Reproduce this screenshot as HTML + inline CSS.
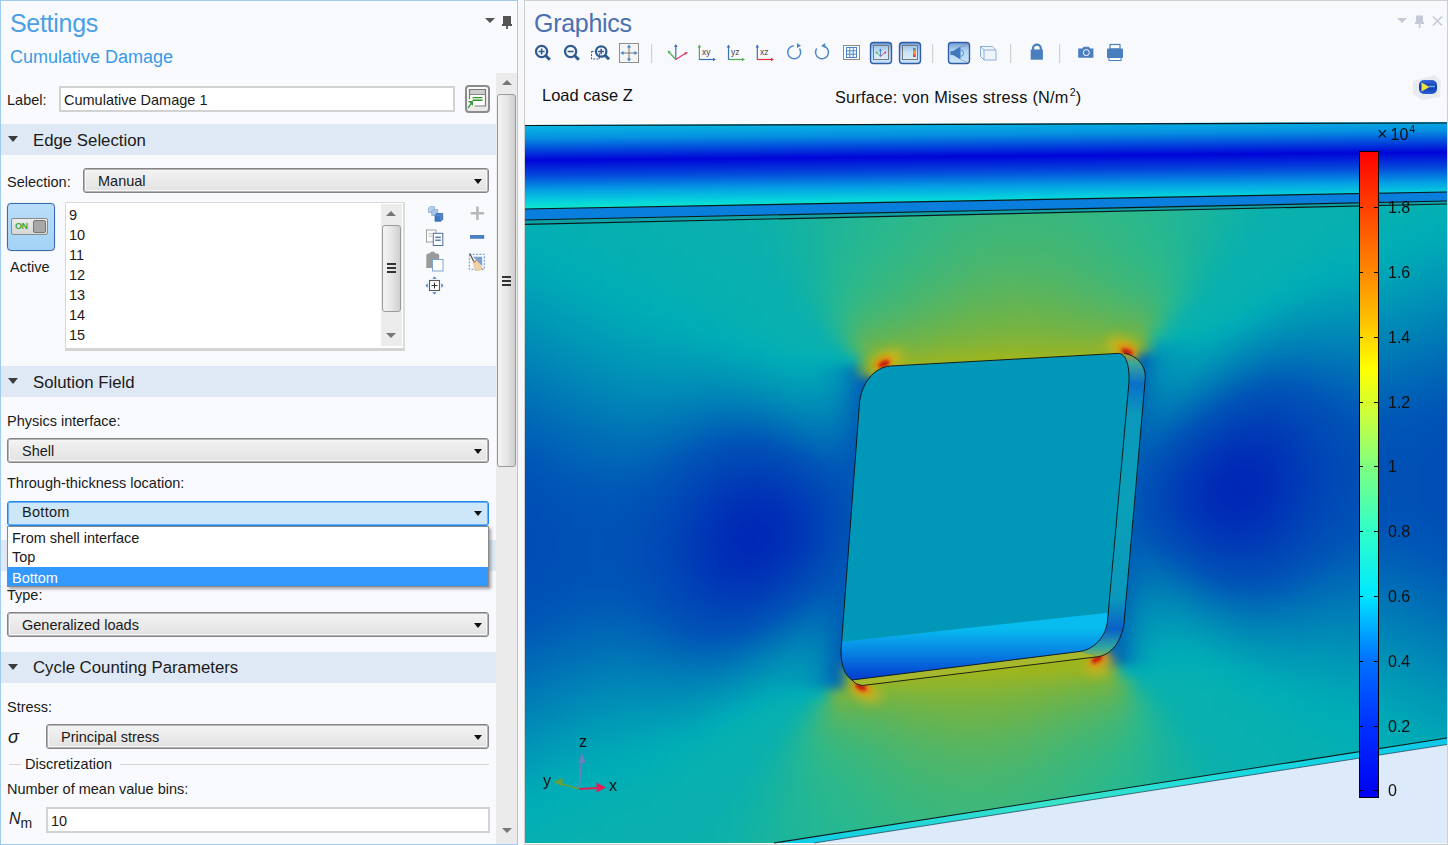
<!DOCTYPE html>
<html><head><meta charset="utf-8">
<style>
*{box-sizing:border-box;margin:0;padding:0}
html,body{width:1448px;height:845px;overflow:hidden;background:#f7f8fb;font-family:"Liberation Sans",sans-serif;color:#1a1a1a}
.a{position:absolute}
.t{position:absolute;white-space:nowrap;line-height:1;font-size:14.5px}
.band{position:absolute;left:1px;width:495px;height:31px;background:#dfe9f5}
.tri{position:absolute;width:0;height:0;border-left:5.5px solid transparent;border-right:5.5px solid transparent;border-top:6.5px solid #3c3c3c}
.combo{position:absolute;height:25px;border:1px solid #858585;border-radius:3px;background:linear-gradient(#f3f3f3,#e2e2e2);box-shadow:inset 0 0 0 1px #b4b4b4,inset 0 0 0 2px #f6f6f6}
.combo .dd{position:absolute;right:6px;top:10px;width:0;height:0;border-left:4.5px solid transparent;border-right:4.5px solid transparent;border-top:5px solid #111}
.combo span{position:absolute;left:14px;top:5px;font-size:14.5px;line-height:1;white-space:nowrap}
.tb{position:absolute;background:#fff;border:2px solid #d2d2d2}
#fld i{position:absolute;left:0;width:100%;height:13px;display:block}
</style></head><body>
<!-- LEFT PANEL -->
<div class="a" style="left:0;top:0;width:518px;height:845px;background:#f9fafe"></div>
<div class="a" style="left:0;top:0;width:518px;height:1px;background:#9dcbf2"></div>
<div class="a" style="left:0;top:0;width:1px;height:845px;background:#9dcbf2"></div>
<div class="a" style="left:517px;top:0;width:1px;height:845px;background:#9dcbf2"></div>
<div class="a" style="left:0;top:844px;width:518px;height:1px;background:#9dcbf2"></div>

<div class="t" style="left:10px;top:11px;font-size:25px;letter-spacing:-0.3px;color:#4a9fe8">Settings</div>
<div class="t" style="left:10px;top:48px;font-size:18px;color:#3a9ae8">Cumulative Damage</div>
<!-- panel icons -->
<div class="tri" style="left:485px;top:18px;border-left-width:5px;border-right-width:5px;border-top:5px solid #555"></div>
<div class="a" style="left:503px;top:16px;width:8px;height:8px;background:#555"></div>
<div class="a" style="left:502px;top:24px;width:10px;height:2px;background:#555"></div>
<div class="a" style="left:506px;top:26px;width:2px;height:3px;background:#666"></div>

<!-- outer scrollbar -->
<div class="a" style="left:496px;top:73px;width:21px;height:771px;background:#ebebeb"></div>
<div class="tri" style="left:502px;top:80px;border-top:none;border-bottom:5px solid #777;border-left-width:5px;border-right-width:5px"></div>
<div class="a" style="left:497px;top:94px;width:19px;height:373px;border:1px solid #9a9a9a;border-radius:3px;background:linear-gradient(90deg,#f4f4f4 0%,#e6e6e6 50%,#cfcfcf 100%)"></div>
<div class="a" style="left:502px;top:276px;width:9px;height:2px;background:#333"></div>
<div class="a" style="left:502px;top:280px;width:9px;height:2px;background:#333"></div>
<div class="a" style="left:502px;top:284px;width:9px;height:2px;background:#333"></div>
<div class="tri" style="left:502px;top:828px;border-left-width:5px;border-right-width:5px;border-top:5px solid #777"></div>

<!-- Label row -->
<div class="t" style="left:7px;top:93px">Label:</div>
<div class="tb" style="left:59px;top:86px;width:396px;height:26px"></div>
<div class="t" style="left:64px;top:93px">Cumulative Damage 1</div>
<div class="a" style="left:465px;top:85px;width:25px;height:28px;border:2px solid #8c8c8c;border-radius:4px;background:linear-gradient(#fafafa,#e8e8e8)"></div>
<svg class="a" style="left:465px;top:85px" width="25" height="28" viewBox="465 85 25 28">
  <rect x="469.5" y="94.5" width="16" height="12" fill="#fff"/>
  <rect x="469.5" y="89.5" width="16" height="5" fill="#cdcdcd"/>
  <path d="M469.5 99V89.5h16v16.5h-11" fill="none" stroke="#777" stroke-width="1.2"/>
  <path d="M469.5 94.5h16" stroke="#888" stroke-width="1"/>
  <rect x="472.5" y="97" width="10" height="1.3" fill="#3a9a30"/><rect x="472.5" y="99.5" width="10" height="1.5" fill="#2f8f25"/>
  <path d="M468 101h5v5l-1.5-1.5-3 4-1-1 3-4z" fill="#3a9a40"/>
</svg>

<!-- Edge Selection -->
<div class="band" style="top:124px"></div>
<div class="tri" style="left:8px;top:136px"></div>
<div class="t" style="left:33px;top:133px;font-size:16.8px">Edge Selection</div>
<div class="t" style="left:7px;top:175px">Selection:</div>
<div class="combo" style="left:83px;top:168px;width:406px"><span style="left:14px">Manual</span><i class="dd"></i></div>

<!-- Active button -->
<div class="a" style="left:7px;top:203px;width:48px;height:48px;border:1px solid #3a6cad;border-radius:4px;background:linear-gradient(#b9defa,#a3d2f6);box-shadow:0 0 1px #888"></div>
<div class="a" style="left:11px;top:218px;width:37px;height:17px;border:1px solid #8a8a8a;border-radius:2px;background:linear-gradient(#ececec,#d6d6d6)"></div>
<div class="t" style="left:15px;top:222px;font-size:9px;font-weight:bold;color:#36a83f;letter-spacing:-0.5px">ON</div>
<div class="a" style="left:33px;top:220px;width:13px;height:13px;border:1px solid #777;border-radius:2px;background:#a8a8a8"></div>
<div class="t" style="left:10px;top:260px">Active</div>

<!-- listbox -->
<div class="a" style="left:65px;top:202px;width:340px;height:149px;background:#fff;border:1px solid #dadada;border-bottom:3px solid #d4d4d4;border-right:2px solid #dcdcdc"></div>
<div class="t" style="left:69px;top:208px">9</div>
<div class="t" style="left:69px;top:228px">10</div>
<div class="t" style="left:69px;top:248px">11</div>
<div class="t" style="left:69px;top:268px">12</div>
<div class="t" style="left:69px;top:288px">13</div>
<div class="t" style="left:69px;top:308px">14</div>
<div class="t" style="left:69px;top:328px">15</div>
<div class="a" style="left:381px;top:204px;width:21px;height:142px;background:#ececec"></div>
<div class="tri" style="left:386px;top:211px;border-top:none;border-bottom:5px solid #777;border-left-width:5px;border-right-width:5px"></div>
<div class="a" style="left:382px;top:225px;width:19px;height:87px;border:1px solid #9a9a9a;border-radius:3px;background:linear-gradient(90deg,#f4f4f4 0%,#e6e6e6 50%,#cfcfcf 100%)"></div>
<div class="a" style="left:387px;top:263px;width:9px;height:2px;background:#333"></div>
<div class="a" style="left:387px;top:267px;width:9px;height:2px;background:#333"></div>
<div class="a" style="left:387px;top:271px;width:9px;height:2px;background:#333"></div>
<div class="tri" style="left:386px;top:333px;border-left-width:5px;border-right-width:5px;border-top:5px solid #777"></div>

<!-- list tool icons -->
<svg class="a" style="left:420px;top:200px" width="72" height="100" viewBox="420 200 72 100">
  <g stroke-width="0.8">
    <path d="M428.5 208l1.5-1.5h4.5v4.5l-1.5 1.5h-4.5z" fill="#b9cfe9" stroke="#8eaed6"/>
    <path d="M431.7 211l1.5-1.5h4.5v4.5l-1.5 1.5h-4.5z" fill="#a9c3e4" stroke="#86a8d3"/>
    <path d="M435 215.2l1.7-1.7h6v6l-1.7 1.7h-6z" fill="#3f78c0" stroke="#2f66ae"/>
    <path d="M435 215.2h6v6M441 215.2l1.7-1.7" fill="none" stroke="#7aa4d8" stroke-width="0.6"/>
  </g>
  <rect x="426.5" y="230" width="9.5" height="12" fill="#fbfbfb" stroke="#9a9a9a" stroke-width="0.9"/>
  <rect x="428.5" y="233" width="4" height="1.2" fill="#c8c8c8"/><rect x="428.5" y="235.5" width="4" height="1.2" fill="#c8c8c8"/>
  <rect x="433.3" y="233.3" width="9.5" height="12.2" fill="#fff" stroke="#4f6f9f" stroke-width="1"/>
  <rect x="435.3" y="236.5" width="5.5" height="1.6" fill="#5f7faf"/><rect x="435.3" y="239.5" width="5.5" height="1.6" fill="#5f7faf"/>
  <path d="M426.3 268V255.5q0-2 2-2h1.3q1-2 3-2t3 2h1.6q2 0 2 2V259h-7v9z" fill="#9a9a9a"/>
  <rect x="432.5" y="259.5" width="10.5" height="11.5" fill="#fff" stroke="#7ea4d4" stroke-width="1"/>
  <rect x="429.5" y="280.5" width="10" height="10" fill="#fff" stroke="#5a5a5a" stroke-width="1.1"/>
  <path d="M434.5 282.5v6M431.5 285.5h6" stroke="#333" stroke-width="1"/>
  <path d="M434.5 276.5l2.2 2.2h-4.4zM434.5 294.5l2.2-2.2h-4.4zM425.5 285.5l2.2-2.2v4.4zM443.5 285.5l-2.2-2.2v4.4z" fill="#3f7cc6"/>
  <path d="M477.4 206.5v13.4M470.7 213.2h13.4" stroke="#b8b8b8" stroke-width="2.6"/>
  <rect x="470" y="235" width="14.2" height="3.8" fill="#4a7fc0"/>
  <rect x="469.3" y="254.3" width="15" height="15" fill="none" stroke="#4f86c8" stroke-width="0.9" stroke-dasharray="2 1.4"/>
  <path d="M473 256.8h9.2v9.5z" fill="#7aa2d2"/>
  <path d="M469.8 253.5l4.5 9" stroke="#5a5a5a" stroke-width="1.3"/>
  <path d="M473.5 261.5l3-1.5q3 4 6 9q-4 2-7 1.5q-1.5-4-2-9z" fill="#f2d4a8" stroke="#c8a070" stroke-width="0.5"/>
  <path d="M473.8 262.2l2.8-1.4" stroke="#d04030" stroke-width="0.8"/>
</svg>

<!-- Solution Field -->
<div class="band" style="top:366px"></div>
<div class="tri" style="left:8px;top:378px"></div>
<div class="t" style="left:33px;top:375px;font-size:16.8px">Solution Field</div>
<div class="t" style="left:7px;top:414px">Physics interface:</div>
<div class="combo" style="left:7px;top:438px;width:482px"><span>Shell</span><i class="dd"></i></div>
<div class="t" style="left:7px;top:476px">Through-thickness location:</div>
<!-- hidden band behind dropdown -->
<div class="band" style="top:540px"></div>
<div class="a" style="left:7px;top:501px;width:482px;height:25px;border:1px solid #1e86ec;border-radius:3px;background:#cde6f8;box-shadow:inset 0 0 0 1px #6ab0f2"></div>
<div class="t" style="left:22px;top:505px;letter-spacing:0.3px">Bottom</div>
<div class="a" style="left:474px;top:511px;width:0;height:0;border-left:4.5px solid transparent;border-right:4.5px solid transparent;border-top:5px solid #111"></div>
<!-- dropdown list -->
<div class="a" style="left:7px;top:526px;width:482px;height:61px;background:#fff;border:1px solid #8a8a8a;box-shadow:2px 2px 3px rgba(0,0,0,0.35)"></div>
<div class="t" style="left:12px;top:531px">From shell interface</div>
<div class="t" style="left:12px;top:550px">Top</div>
<div class="a" style="left:8px;top:567px;width:480px;height:19px;background:#3399ff"></div>
<div class="t" style="left:12px;top:571px;color:#fff">Bottom</div>

<div class="t" style="left:7px;top:588px">Type:</div>
<div class="combo" style="left:7px;top:612px;width:482px"><span>Generalized loads</span><i class="dd"></i></div>

<!-- Cycle Counting -->
<div class="band" style="top:652px"></div>
<div class="tri" style="left:8px;top:664px"></div>
<div class="t" style="left:33px;top:660px;font-size:16.8px">Cycle Counting Parameters</div>
<div class="t" style="left:7px;top:700px">Stress:</div>
<div class="t" style="left:8px;top:728px;font-size:18px;font-style:italic">σ</div>
<div class="combo" style="left:46px;top:724px;width:443px"><span>Principal stress</span><i class="dd"></i></div>
<div class="a" style="left:9px;top:764px;width:12px;height:1px;background:#d4d4d4"></div>
<div class="a" style="left:120px;top:764px;width:369px;height:1px;background:#d4d4d4"></div>
<div class="t" style="left:25px;top:757px">Discretization</div>
<div class="t" style="left:7px;top:782px">Number of mean value bins:</div>
<div class="t" style="left:9px;top:811px;font-size:16px;font-style:italic">N<span style="font-style:normal;font-size:14px;position:relative;top:4px">m</span></div>
<div class="tb" style="left:46px;top:807px;width:444px;height:26px"></div>
<div class="t" style="left:51px;top:814px">10</div>


<!-- RIGHT PANEL -->
<div class="a" style="left:524px;top:0;width:924px;height:845px;background:#f8f9fd;border:1px solid #cfcfcf"></div>
<div class="t" style="left:534px;top:11px;font-size:25px;letter-spacing:-0.3px;color:#4a70b0">Graphics</div>
<!-- panel icons -->
<svg class="a" style="left:1394px;top:14px" width="52" height="16" viewBox="0 0 52 16">
  <path d="M3 4h10l-5 5z" fill="#c3cad6"/>
  <rect x="22" y="1.5" width="7" height="7" fill="#c3cad6"/><rect x="21" y="8" width="9" height="2" fill="#c3cad6"/><rect x="24.8" y="10" width="1.6" height="4" fill="#c3cad6"/>
  <path d="M39 2.5l9 9M48 2.5l-9 9" stroke="#c3cad6" stroke-width="1.6"/>
</svg>
<!-- toolbar -->
<svg class="a" style="left:525px;top:38px" width="620" height="30" viewBox="525 38 620 30">
  <g fill="none" stroke="#2e5b8f" stroke-width="2.2">
    <circle cx="541.6" cy="51.5" r="5.6"/><path d="M545.6 55.5l4.2 4.2" stroke-width="3"/>
    <path d="M538.6 51.5h6M541.6 48.5v6" stroke-width="1.6"/>
    <circle cx="570.6" cy="51.5" r="5.6"/><path d="M574.6 55.5l4.2 4.2" stroke-width="3"/>
    <path d="M567.6 51.5h6" stroke-width="1.6"/>
    <circle cx="601.2" cy="51.5" r="5.2"/><path d="M605 55.3l4 4" stroke-width="3"/>
    <path d="M598.4 51.5h5.6M601.2 48.7v5.6" stroke-width="1.5"/>
  </g>
  <rect x="591.5" y="51.5" width="8" height="7.5" fill="none" stroke="#2e5b8f" stroke-width="1" stroke-dasharray="2 1.3"/>
  <rect x="619.5" y="43.5" width="19" height="19" fill="#f4f4f4" stroke="#8f8f8f" stroke-width="1"/>
  <path d="M629 46v14M622 53h14" stroke="#777" stroke-width="1"/>
  <path d="M629 44.5l2 3h-4zM629 61.5l2-3h-4zM620.5 53l3-2v4zM637.5 53l-3-2v4z" fill="#3d7cc9"/>
  <rect x="651" y="44" width="1.2" height="19" fill="#d0d0d0"/>
  <path d="M675.8 59.5V45.5" stroke="#3d6fb5" stroke-width="1.2"/><path d="M675.8 44l-1.8 3h3.6z" fill="#3d6fb5"/>
  <path d="M675.8 59.5L668.5 51.5" stroke="#4caf50" stroke-width="1.2"/><path d="M667.5 50.5l3.3 1.2-2.1 2.1z" fill="#4caf50"/>
  <path d="M675.8 59.5L686 53" stroke="#e23b6b" stroke-width="1.4"/><path d="M688 52l-3.7 0.5 1.5 2.6z" fill="#e23b6b"/>
  <g font-family="Liberation Sans" font-size="8.5" fill="#444">
    <text x="702" y="55">xy</text><text x="731" y="55">yz</text><text x="760" y="55">xz</text>
  </g>
  <path d="M699.4 60V46" stroke="#4caf50" stroke-width="1.2"/><path d="M699.4 44.5l-1.8 3h3.6z" fill="#4caf50"/>
  <path d="M699.4 59.5H714" stroke="#3d6fb5" stroke-width="1.2"/><path d="M716 59.5l-3-1.8v3.6z" fill="#3d6fb5"/>
  <path d="M728.5 60V46" stroke="#3d6fb5" stroke-width="1.2"/><path d="M728.5 44.5l-1.8 3h3.6z" fill="#3d6fb5"/>
  <path d="M728.5 59.5H743" stroke="#4caf50" stroke-width="1.2"/><path d="M745 59.5l-3-1.8v3.6z" fill="#4caf50"/>
  <path d="M757.3 60V46" stroke="#3d6fb5" stroke-width="1.2"/><path d="M757.3 44.5l-1.8 3h3.6z" fill="#3d6fb5"/>
  <path d="M757.3 59.5H772" stroke="#d33" stroke-width="1.2"/><path d="M774 59.5l-3-1.8v3.6z" fill="#d33"/>
  <g fill="none" stroke="#4a86c8" stroke-width="1.4">
    <path d="M799.5 48.5A6.5 6.5 0 1 1 793.7 45.8"/>
    <path d="M816.7 48.5A6.5 6.5 0 1 0 822.5 45.8"/>
  </g>
  <path d="M797 43l4 2.8-4 2.2z" fill="#4a86c8"/><path d="M825.2 43l-4 2.8 4 2.2z" fill="#4a86c8"/>
  <rect x="843.5" y="45.5" width="16" height="14" fill="#fff" stroke="#8c8c8c" stroke-width="1"/>
  <g stroke="#4a86c8" stroke-width="1" fill="none"><rect x="846.5" y="47.5" width="10" height="10"/><path d="M849.8 47.5v10M853.2 47.5v10M846.5 50.8h10M846.5 54.2h10"/></g>
  <rect x="870.5" y="42.5" width="21" height="21" rx="3" fill="url(#pbg)" stroke="#2f5ea6" stroke-width="1.4"/>
  <rect x="873.5" y="45.5" width="15" height="14" fill="url(#pin)" stroke="#7a7a7a" stroke-width="1"/>
  <path d="M880.4 56.5V50" stroke="#4a7cc0" stroke-width="1"/><path d="M880.4 48.5l-1.5 2.5h3z" fill="#4a7cc0"/>
  <path d="M880.4 56.5L877 52.5" stroke="#4caf50" stroke-width="0.9"/><circle cx="876.6" cy="52.5" r="1" fill="#4caf50"/>
  <path d="M880.4 56.5L885 52.5" stroke="#e23b6b" stroke-width="0.9"/><circle cx="885.3" cy="52.5" r="1" fill="#e23b6b"/>
  <rect x="899.5" y="42.5" width="21" height="21" rx="3" fill="url(#pbg)" stroke="#2f5ea6" stroke-width="1.4"/>
  <rect x="902.5" y="45.5" width="15" height="14" fill="url(#pin)" stroke="#7a7a7a" stroke-width="1"/>
  <rect x="913" y="48" width="2.8" height="9" rx="0.8" fill="url(#cbar)"/>
  <defs><linearGradient id="pbg" x1="0" y1="0" x2="0" y2="1"><stop offset="0" stop-color="#6e9cd2"/><stop offset="0.4" stop-color="#b4d6f4"/><stop offset="1" stop-color="#c8e6fb"/></linearGradient>
  <linearGradient id="pin" x1="0" y1="0" x2="0" y2="1"><stop offset="0" stop-color="#9cc4ea"/><stop offset="0.5" stop-color="#cce4f8"/><stop offset="1" stop-color="#d8eefc"/></linearGradient></defs>
  <rect x="932" y="44" width="1.2" height="19" fill="#d0d0d0"/>
  <rect x="948.5" y="42.5" width="21" height="21" rx="3" fill="url(#pbg)" stroke="#2f5ea6" stroke-width="1.4"/>
  <path d="M950.5 51h2.5l7.5-4.5v13l-7.5-4.5h-2.5z" fill="#3f78bd"/>
  <path d="M960.5 47l8.5-3.5M960.5 59.5l8.5 3.5" stroke="#9a7f8a" stroke-width="0.6"/>
  <path d="M960.5 50a3.2 3.2 0 0 1 0 6.4" stroke="#4f7fbf" fill="none" stroke-width="0.8"/>
  <g fill="none" stroke="#8fb0d8" stroke-width="1">
    <path d="M980.5 46.5h12l3.5 3.5v10h-12l-3.5-3.5z" fill="#eef4fb"/>
    <path d="M984 50h12M984 50v10M980.5 46.5l3.5 3.5"/>
  </g>
  <rect x="1010" y="44" width="1.2" height="19" fill="#d0d0d0"/>
  <path d="M1033 50v-1.5a3.9 3.9 0 0 1 7.8 0V50" fill="none" stroke="#4a7fbf" stroke-width="2.2"/>
  <rect x="1030.7" y="49.5" width="12.2" height="10.2" fill="#4a7fbf"/>
  <rect x="1059" y="44" width="1.2" height="19" fill="#d0d0d0"/>
  <path d="M1078.2 48.5h4l1.5-1.8h5l1.5 1.8h3.2v9.3h-15.2z" fill="#4a7fbf"/>
  <circle cx="1086.3" cy="52.6" r="3" fill="none" stroke="#fff" stroke-width="1"/>
  <rect x="1110" y="44.5" width="10" height="4.5" fill="#fff" stroke="#4a7fbf" stroke-width="1.2"/>
  <rect x="1107" y="48.5" width="16" height="9.5" rx="1" fill="#4a7fbf"/>
  <rect x="1109" y="57.5" width="12" height="3" fill="#fff" stroke="#4a7fbf" stroke-width="1"/>
  <defs><linearGradient id="cbar" x1="0" y1="0" x2="0" y2="1"><stop offset="0" stop-color="#4a78b8"/><stop offset=".5" stop-color="#f8a020"/><stop offset="1" stop-color="#e02040"/></linearGradient></defs>
</svg>
<div class="t" style="left:542px;top:87px;font-size:16.5px;color:#111">Load case Z</div>
<div class="t" style="left:835px;top:89px;font-size:16.3px;letter-spacing:0.25px;color:#111">Surface: von Mises stress (N/m<sup style="font-size:10.5px;position:relative;top:-2px;vertical-align:top;margin-left:1px">2</sup>)</div>
<!-- logo -->
<svg class="a" style="left:1410px;top:72px" width="36" height="30" viewBox="1410 72 36 30">
  <path d="M1413 81l22-6 6 6-1 16-18 3-9-6z" fill="#e6e9ee" opacity="0.9"/>
  <defs><linearGradient id="lg1" x1="0" y1="0" x2="0" y2="1"><stop offset="0" stop-color="#3a6ad8"/><stop offset="0.5" stop-color="#1038b0"/><stop offset="1" stop-color="#2860d0"/></linearGradient></defs>
  <rect x="1419" y="80" width="18" height="14" rx="5" fill="url(#lg1)"/>
  <path d="M1421.5 82.5l8 4.5-8 4.5z" fill="#f0e040"/>
  <path d="M1429 86.5h6" stroke="#60b0f0" stroke-width="1.5"/>
</svg>

<!--FIELD--><div class="a" style="left:525px;top:125px;width:922px;height:718px;overflow:hidden"><div id="fld" style="position:absolute;left:-24px;top:-24px;width:970px;height:766px;filter:blur(5px)"><i style="top:0px;background:linear-gradient(90deg,#0ab0ac 0px,#0bb0ac 16px,#0bb1ac 32px,#0bb1ac 48px,#0bb1ac 64px,#0bb1ac 80px,#0bb1ab 96px,#0bb1ab 112px,#0cb1ab 128px,#0cb1ab 144px,#0cb1ab 160px,#0cb1ab 176px,#0db1a9 192px,#0eb1a8 208px,#10b2a7 224px,#11b2a6 240px,#13b2a4 256px,#14b3a2 272px,#16b3a1 288px,#18b49f 304px,#1ab49d 320px,#1bb49b 336px,#1db59a 352px,#1fb598 368px,#21b696 384px,#22b695 400px,#23b694 416px,#25b792 432px,#26b791 448px,#27b790 464px,#28b78f 480px,#29b88f 496px,#29b88e 512px,#29b88e 528px,#29b88e 544px,#29b88f 560px,#28b78f 576px,#27b790 592px,#26b791 608px,#25b792 624px,#23b694 640px,#22b695 656px,#20b597 672px,#1eb599 688px,#1cb59b 704px,#1ab49d 720px,#17b39f 736px,#15b3a2 752px,#13b2a4 768px,#11b2a6 784px,#0fb2a8 800px,#0db1a9 816px,#0cb1ab 832px,#0cb1ab 848px,#0bb1ab 864px,#0bb1ab 880px,#0bb1ac 896px,#0bb1ac 912px,#0bb1ac 928px,#0bb1ac 944px,#0bb0ac 960px,#0ab0ac 976px)"></i><i style="top:12px;background:linear-gradient(90deg,#0ab0ad 0px,#0ab0ad 16px,#0ab0ac 32px,#0ab0ac 48px,#0bb0ac 64px,#0bb1ac 80px,#0bb1ac 96px,#0bb1ac 112px,#0bb1ab 128px,#0bb1ab 144px,#0cb1ab 160px,#0cb1ab 176px,#0db1aa 192px,#0eb1a9 208px,#0fb2a8 224px,#11b2a6 240px,#12b2a5 256px,#14b3a3 272px,#16b3a1 288px,#18b49f 304px,#1ab49d 320px,#1cb49b 336px,#1eb599 352px,#1fb598 368px,#21b696 384px,#23b694 400px,#24b693 416px,#26b791 432px,#27b790 448px,#28b78f 464px,#29b88e 480px,#2ab88d 496px,#2ab88d 512px,#2ab88d 528px,#2ab88d 544px,#2ab88d 560px,#29b88e 576px,#28b78f 592px,#27b790 608px,#25b792 624px,#24b693 640px,#22b695 656px,#20b697 672px,#1eb599 688px,#1cb59b 704px,#19b49e 720px,#17b3a0 736px,#15b3a2 752px,#12b2a4 768px,#10b2a7 784px,#0eb1a9 800px,#0cb1aa 816px,#0bb1ab 832px,#0bb1ab 848px,#0bb1ac 864px,#0bb1ac 880px,#0bb1ac 896px,#0bb0ac 912px,#0ab0ac 928px,#0ab0ac 944px,#0ab0ad 960px,#0ab0ad 976px)"></i><i style="top:24px;background:linear-gradient(90deg,#09b0ad 0px,#0ab0ad 16px,#0ab0ad 32px,#0ab0ad 48px,#0ab0ac 64px,#0ab0ac 80px,#0bb0ac 96px,#0bb1ac 112px,#0bb1ac 128px,#0bb1ac 144px,#0bb1ab 160px,#0bb1ab 176px,#0cb1ab 192px,#0db1aa 208px,#0fb1a8 224px,#10b2a7 240px,#12b2a5 256px,#14b3a3 272px,#16b3a1 288px,#18b49f 304px,#1ab49d 320px,#1cb59b 336px,#1eb599 352px,#20b597 368px,#22b695 384px,#23b694 400px,#25b792 416px,#27b791 432px,#28b78f 448px,#29b88e 464px,#2ab88d 480px,#2bb88c 496px,#2bb88c 512px,#2cb88c 528px,#2bb88c 544px,#2bb88c 560px,#2ab88d 576px,#29b88e 592px,#28b78f 608px,#26b791 624px,#24b793 640px,#22b695 656px,#20b697 672px,#1eb599 688px,#1cb49b 704px,#19b49e 720px,#16b3a0 736px,#14b3a3 752px,#12b2a5 768px,#0fb2a7 784px,#0db1aa 800px,#0bb1ab 816px,#0bb1ac 832px,#0bb1ac 848px,#0bb1ac 864px,#0bb0ac 880px,#0ab0ac 896px,#0ab0ac 912px,#0ab0ad 928px,#0ab0ad 944px,#0ab0ad 960px,#09b0ae 976px)"></i><i style="top:36px;background:linear-gradient(90deg,#09b0ae 0px,#09b0ae 16px,#09b0ad 32px,#0ab0ad 48px,#0ab0ad 64px,#0ab0ad 80px,#0ab0ac 96px,#0ab0ac 112px,#0bb0ac 128px,#0bb1ac 144px,#0bb1ac 160px,#0bb1ac 176px,#0bb1ab 192px,#0cb1aa 208px,#0eb1a9 224px,#0fb2a7 240px,#11b2a5 256px,#13b3a4 272px,#15b3a2 288px,#17b49f 304px,#1ab49d 320px,#1cb59b 336px,#1eb599 352px,#20b697 368px,#22b695 384px,#24b693 400px,#26b791 416px,#28b790 432px,#29b88e 448px,#2ab88d 464px,#2bb88c 480px,#2cb88b 496px,#2db88a 512px,#2db88a 528px,#2db88b 544px,#2cb88b 560px,#2bb88c 576px,#2ab88d 592px,#29b78f 608px,#27b790 624px,#25b792 640px,#23b694 656px,#21b696 672px,#1eb599 688px,#1bb49b 704px,#19b49e 720px,#16b3a1 736px,#13b2a4 752px,#11b2a6 768px,#0eb1a9 784px,#0cb1ab 800px,#0bb1ac 816px,#0bb1ac 832px,#0bb0ac 848px,#0ab0ac 864px,#0ab0ac 880px,#0ab0ad 896px,#0ab0ad 912px,#0ab0ad 928px,#09b0ad 944px,#09b0ae 960px,#08b0ae 976px)"></i><i style="top:48px;background:linear-gradient(90deg,#08b0ae 0px,#09b0ae 16px,#09b0ae 32px,#09b0ae 48px,#09b0ad 64px,#09b0ad 80px,#0ab0ad 96px,#0ab0ad 112px,#0ab0ac 128px,#0ab0ac 144px,#0bb0ac 160px,#0bb1ac 176px,#0bb1ac 192px,#0cb1ab 208px,#0db1aa 224px,#0fb1a8 240px,#11b2a6 256px,#13b2a4 272px,#15b3a2 288px,#17b3a0 304px,#1ab49d 320px,#1cb59b 336px,#1fb598 352px,#21b696 368px,#23b694 384px,#25b792 400px,#27b790 416px,#29b88e 432px,#2ab88d 448px,#2cb88b 464px,#2db88a 480px,#2eb889 496px,#2fb889 512px,#2fb889 528px,#2eb889 544px,#2eb88a 560px,#2cb88b 576px,#2bb88c 592px,#29b88e 608px,#28b790 624px,#26b792 640px,#23b694 656px,#21b696 672px,#1eb599 688px,#1bb49c 704px,#18b49f 720px,#15b3a2 736px,#12b2a5 752px,#10b2a7 768px,#0db1aa 784px,#0bb1ac 800px,#0bb0ac 816px,#0ab0ac 832px,#0ab0ac 848px,#0ab0ad 864px,#0ab0ad 880px,#0ab0ad 896px,#09b0ad 912px,#09b0ae 928px,#08b0ae 944px,#08b0af 960px,#07b0b0 976px)"></i><i style="top:60px;background:linear-gradient(90deg,#07b0af 0px,#08b0af 16px,#08b0ae 32px,#08b0ae 48px,#09b0ae 64px,#09b0ae 80px,#09b0ad 96px,#09b0ad 112px,#0ab0ad 128px,#0ab0ad 144px,#0ab0ac 160px,#0ab0ac 176px,#0bb1ac 192px,#0bb1ac 208px,#0cb1aa 224px,#0eb1a9 240px,#10b2a7 256px,#12b2a5 272px,#15b3a2 288px,#17b3a0 304px,#1ab49d 320px,#1cb59b 336px,#1fb598 352px,#21b696 368px,#24b693 384px,#26b791 400px,#28b78f 416px,#2ab88d 432px,#2cb88c 448px,#2db88a 464px,#2fb888 480px,#30b887 496px,#31b887 512px,#31b887 528px,#30b887 544px,#2fb888 560px,#2eb889 576px,#2cb88b 592px,#2ab88d 608px,#28b78f 624px,#26b791 640px,#24b693 656px,#21b696 672px,#1eb599 688px,#1bb49c 704px,#18b49f 720px,#14b3a2 736px,#11b2a5 752px,#0eb1a8 768px,#0cb1ab 784px,#0ab0ac 800px,#0ab0ac 816px,#0ab0ad 832px,#0ab0ad 848px,#0ab0ad 864px,#09b0ad 880px,#09b0ae 896px,#09b0ae 912px,#08b0af 928px,#07b0af 944px,#07b0b0 960px,#06afb1 976px)"></i><i style="top:72px;background:linear-gradient(90deg,#06afb0 0px,#07b0b0 16px,#07b0af 32px,#08b0af 48px,#08b0af 64px,#08b0ae 80px,#09b0ae 96px,#09b0ae 112px,#09b0ad 128px,#0ab0ad 144px,#0ab0ad 160px,#0ab0ad 176px,#0ab0ac 192px,#0bb0ac 208px,#0bb1ab 224px,#0db1aa 240px,#0fb2a7 256px,#12b2a5 272px,#14b3a3 288px,#17b3a0 304px,#1ab49d 320px,#1db59a 336px,#1fb598 352px,#22b695 368px,#25b793 384px,#27b790 400px,#29b88e 416px,#2bb88c 432px,#2db88a 448px,#2fb888 464px,#31b886 480px,#32b885 496px,#33b884 512px,#33b884 528px,#32b885 544px,#31b886 560px,#30b887 576px,#2eb889 592px,#2cb88c 608px,#29b88e 624px,#27b790 640px,#24b793 656px,#21b696 672px,#1eb599 688px,#1bb49c 704px,#17b3a0 720px,#13b3a3 736px,#10b2a7 752px,#0db1aa 768px,#0ab0ac 784px,#0ab0ad 800px,#0ab0ad 816px,#0ab0ad 832px,#09b0ad 848px,#09b0ae 864px,#09b0ae 880px,#08b0ae 896px,#08b0af 912px,#07b0b0 928px,#06afb0 944px,#05afb1 960px,#04afb2 976px)"></i><i style="top:84px;background:linear-gradient(90deg,#05afb1 0px,#06afb1 16px,#06b0b0 32px,#07b0b0 48px,#07b0af 64px,#08b0af 80px,#08b0af 96px,#08b0ae 112px,#09b0ae 128px,#09b0ae 144px,#09b0ad 160px,#0ab0ad 176px,#0ab0ad 192px,#0ab0ac 208px,#0ab0ac 224px,#0cb1aa 240px,#0eb1a8 256px,#11b2a6 272px,#14b3a3 288px,#17b3a0 304px,#1ab49d 320px,#1db59a 336px,#20b697 352px,#23b694 368px,#25b792 384px,#28b78f 400px,#2ab88d 416px,#2db88b 432px,#2fb888 448px,#31b886 464px,#33b884 480px,#35b883 496px,#35b882 512px,#35b882 528px,#35b882 544px,#34b884 560px,#32b885 576px,#30b888 592px,#2db88a 608px,#2ab88d 624px,#28b78f 640px,#25b792 656px,#22b695 672px,#1eb599 688px,#1ab49d 704px,#16b3a1 720px,#12b2a4 736px,#0fb1a8 752px,#0cb1ab 768px,#0ab0ad 784px,#0ab0ad 800px,#09b0ad 816px,#09b0ae 832px,#09b0ae 848px,#08b0ae 864px,#08b0af 880px,#07b0af 896px,#07b0b0 912px,#06afb1 928px,#05afb2 944px,#04afb3 960px,#03afb4 976px)"></i><i style="top:96px;background:linear-gradient(90deg,#04afb2 0px,#05afb2 16px,#05afb1 32px,#06afb1 48px,#07b0b0 64px,#07b0b0 80px,#07b0af 96px,#08b0af 112px,#08b0ae 128px,#09b0ae 144px,#09b0ae 160px,#09b0ad 176px,#0ab0ad 192px,#0ab0ad 208px,#0ab0ad 224px,#0bb1ac 240px,#0eb1a9 256px,#10b2a7 272px,#13b3a4 288px,#16b3a0 304px,#1ab49d 320px,#1db59a 336px,#21b696 352px,#24b693 368px,#26b791 384px,#29b88e 400px,#2cb88b 416px,#2fb889 432px,#31b886 448px,#34b883 464px,#36b881 480px,#37b880 496px,#38b87f 512px,#38b87f 528px,#37b880 544px,#36b881 560px,#34b883 576px,#32b886 592px,#2fb889 608px,#2cb88c 624px,#29b88e 640px,#26b791 656px,#22b695 672px,#1eb599 688px,#1ab49d 704px,#15b3a1 720px,#11b2a6 736px,#0db1a9 752px,#0ab0ad 768px,#0ab0ad 784px,#09b0ad 800px,#09b0ae 816px,#09b0ae 832px,#08b0ae 848px,#08b0af 864px,#07b0b0 880px,#06afb0 896px,#05afb1 912px,#04afb2 928px,#03afb3 944px,#02aeb4 960px,#01aeb6 976px)"></i><i style="top:108px;background:linear-gradient(90deg,#03afb4 0px,#04afb3 16px,#04afb2 32px,#05afb2 48px,#06afb1 64px,#06afb0 80px,#07b0b0 96px,#07b0af 112px,#08b0af 128px,#08b0af 144px,#08b0ae 160px,#09b0ae 176px,#09b0ae 192px,#09b0ad 208px,#0ab0ad 224px,#0ab0ad 240px,#0cb1aa 256px,#0fb2a7 272px,#13b2a4 288px,#16b3a1 304px,#1ab49d 320px,#1eb599 336px,#21b696 352px,#25b792 368px,#28b78f 384px,#2bb88d 400px,#2db88a 416px,#31b886 432px,#34b883 448px,#36b881 464px,#39b77f 480px,#3ab77d 496px,#3bb77c 512px,#3bb77c 528px,#3ab77d 544px,#39b77f 560px,#36b881 576px,#34b883 592px,#30b887 608px,#2db88a 624px,#2ab88d 640px,#27b790 656px,#23b694 672px,#1eb599 688px,#19b49e 704px,#14b3a2 720px,#10b2a7 736px,#0cb1ab 752px,#09b0ad 768px,#09b0ae 784px,#09b0ae 800px,#08b0ae 816px,#08b0af 832px,#07b0af 848px,#07b0b0 864px,#06afb1 880px,#05afb2 896px,#04afb3 912px,#03afb4 928px,#01aeb5 944px,#00aeb6 960px,#00acb6 976px)"></i><i style="top:120px;background:linear-gradient(90deg,#01aeb5 0px,#02afb4 16px,#03afb4 32px,#04afb3 48px,#05afb2 64px,#05afb1 80px,#06afb1 96px,#07b0b0 112px,#07b0b0 128px,#07b0af 144px,#08b0af 160px,#08b0ae 176px,#09b0ae 192px,#09b0ae 208px,#09b0ad 224px,#0ab0ad 240px,#0bb1ab 256px,#0eb1a8 272px,#12b2a5 288px,#16b3a1 304px,#1ab49d 320px,#1eb599 336px,#22b695 352px,#26b791 368px,#29b88e 384px,#2cb88b 400px,#30b887 416px,#33b884 432px,#37b881 448px,#3ab77e 464px,#3cb77b 480px,#3db77a 496px,#3eb779 512px,#3eb779 528px,#3db77a 544px,#3cb77c 560px,#39b77e 576px,#36b881 592px,#33b885 608px,#2fb888 624px,#2bb88c 640px,#28b78f 656px,#23b694 672px,#1eb599 688px,#19b49e 704px,#13b2a4 720px,#0eb1a9 736px,#09b0ad 752px,#09b0ae 768px,#09b0ae 784px,#08b0ae 800px,#08b0af 816px,#07b0af 832px,#06afb0 848px,#05afb1 864px,#04afb2 880px,#03afb3 896px,#02aeb4 912px,#01aeb6 928px,#00adb6 944px,#00aab6 960px,#00a7b6 976px)"></i><i style="top:132px;background:linear-gradient(90deg,#00adb6 0px,#01aeb6 16px,#02aeb5 32px,#03afb4 48px,#03afb3 64px,#04afb2 80px,#05afb2 96px,#06afb1 112px,#06afb0 128px,#07b0b0 144px,#07b0af 160px,#08b0af 176px,#08b0af 192px,#09b0ae 208px,#09b0ae 224px,#09b0ad 240px,#0ab0ad 256px,#0db1aa 272px,#11b2a6 288px,#15b3a1 304px,#1ab49d 320px,#1fb598 336px,#23b694 352px,#27b790 368px,#2bb88c 384px,#2eb889 400px,#32b885 416px,#36b881 432px,#3ab77d 448px,#3db77a 464px,#3fb778 480px,#41b776 496px,#42b775 512px,#42b775 528px,#41b776 544px,#3fb778 560px,#3cb77b 576px,#39b77e 592px,#35b882 608px,#31b886 624px,#2db88a 640px,#29b88e 656px,#24b693 672px,#1eb599 688px,#18b49f 704px,#11b2a5 720px,#0cb1ab 736px,#09b0ae 752px,#09b0ae 768px,#08b0ae 784px,#08b0af 800px,#07b0b0 816px,#06afb1 832px,#05afb2 848px,#03afb3 864px,#02afb4 880px,#01aeb5 896px,#00aeb6 912px,#00acb6 928px,#00a9b6 944px,#00a5b6 960px,#00a2b6 976px)"></i><i style="top:144px;background:linear-gradient(90deg,#00aab6 0px,#00acb6 16px,#00aeb6 32px,#01aeb5 48px,#02aeb4 64px,#03afb4 80px,#04afb3 96px,#05afb2 112px,#05afb1 128px,#06afb1 144px,#07b0b0 160px,#07b0af 176px,#08b0af 192px,#08b0af 208px,#09b0ae 224px,#09b0ae 240px,#09b0ad 256px,#0cb1ab 272px,#10b2a7 288px,#15b3a2 304px,#1ab49d 320px,#20b597 336px,#25b792 352px,#29b88e 368px,#2db88a 384px,#31b886 400px,#35b882 416px,#3ab77e 432px,#3db77a 448px,#41b776 464px,#44b774 480px,#46b672 496px,#46b671 512px,#46b671 528px,#45b672 544px,#43b774 560px,#40b777 576px,#3cb77b 592px,#38b77f 608px,#34b883 624px,#2fb888 640px,#2bb88c 656px,#25b792 672px,#1eb599 688px,#16b3a1 704px,#0fb2a7 720px,#09b0ae 736px,#09b0ae 752px,#08b0af 768px,#08b0af 784px,#07b0b0 800px,#05afb1 816px,#04afb3 832px,#03afb4 848px,#02aeb5 864px,#00aeb6 880px,#00acb6 896px,#00aab6 912px,#00a7b6 928px,#00a4b6 944px,#00a0b6 960px,#009db6 976px)"></i><i style="top:156px;background:linear-gradient(90deg,#00a6b6 0px,#00a8b6 16px,#00abb6 32px,#00adb6 48px,#01aeb6 64px,#02aeb5 80px,#03afb4 96px,#04afb3 112px,#04afb2 128px,#05afb1 144px,#06afb1 160px,#07b0b0 176px,#07b0b0 192px,#08b0af 208px,#08b0af 224px,#09b0ae 240px,#09b0ae 256px,#0ab0ad 272px,#0fb1a8 288px,#14b3a3 304px,#1ab49d 320px,#21b696 336px,#27b790 352px,#2bb88c 368px,#30b887 384px,#34b883 400px,#39b77e 416px,#3db77a 432px,#42b776 448px,#45b672 464px,#48b66f 480px,#4ab66d 496px,#4bb66c 512px,#4bb66c 528px,#4ab66d 544px,#47b670 560px,#44b673 576px,#40b777 592px,#3cb77b 608px,#37b880 624px,#33b885 640px,#2db88a 656px,#26b791 672px,#1db59a 688px,#14b3a2 704px,#0cb1aa 720px,#09b0ae 736px,#08b0af 752px,#08b0af 768px,#07b0b0 784px,#05afb1 800px,#03afb3 816px,#02aeb5 832px,#00aeb6 848px,#00adb6 864px,#00aab6 880px,#00a8b6 896px,#00a5b6 912px,#00a2b6 928px,#009fb6 944px,#009bb6 960px,#0097b6 976px)"></i><i style="top:168px;background:linear-gradient(90deg,#00a2b6 0px,#00a4b6 16px,#00a7b6 32px,#00a9b6 48px,#00acb6 64px,#00aeb6 80px,#01aeb5 96px,#02afb4 112px,#03afb3 128px,#04afb3 144px,#05afb2 160px,#06afb1 176px,#06b0b0 192px,#07b0b0 208px,#08b0af 224px,#08b0af 240px,#09b0ae 256px,#09b0ae 272px,#0db1aa 288px,#13b2a4 304px,#1ab49d 320px,#22b695 336px,#29b88e 352px,#2fb888 368px,#34b884 384px,#38b77f 400px,#3db77a 416px,#42b775 432px,#47b671 448px,#4bb66d 464px,#4eb669 480px,#50b567 496px,#51b566 512px,#51b566 528px,#4fb568 544px,#4db66a 560px,#49b66e 576px,#45b672 592px,#40b777 608px,#3cb77c 624px,#37b880 640px,#31b886 656px,#27b790 672px,#1cb59b 688px,#11b2a5 704px,#09b0ae 720px,#08b0ae 736px,#08b0af 752px,#07b0b0 768px,#05afb2 784px,#02afb4 800px,#00aeb6 816px,#00acb6 832px,#00aab6 848px,#00a7b6 864px,#00a5b6 880px,#00a3b6 896px,#00a0b6 912px,#009cb6 928px,#0099b6 944px,#0095b6 960px,#0091b6 976px)"></i><i style="top:180px;background:linear-gradient(90deg,#009db6 0px,#00a0b6 16px,#00a3b6 32px,#00a6b6 48px,#00a8b6 64px,#00abb6 80px,#00adb6 96px,#01aeb6 112px,#02aeb5 128px,#03afb4 144px,#04afb3 160px,#05afb2 176px,#06afb1 192px,#06b0b0 208px,#07b0b0 224px,#08b0af 240px,#08b0ae 256px,#09b0ae 272px,#0bb0ac 288px,#11b2a5 304px,#1ab49d 320px,#23b694 336px,#2cb88b 352px,#33b884 368px,#38b77f 384px,#3db77a 400px,#43b775 416px,#48b66f 432px,#4db66b 448px,#51b566 464px,#54b563 480px,#57b561 496px,#58b560 512px,#57b560 528px,#56b561 544px,#53b564 560px,#4fb568 576px,#4bb66c 592px,#46b671 608px,#41b776 624px,#3db77b 640px,#35b882 656px,#28b78f 672px,#19b49e 688px,#0db1aa 704px,#08b0ae 720px,#08b0af 736px,#07b0af 752px,#05afb2 768px,#02aeb5 784px,#00adb6 800px,#00a9b6 816px,#00a6b6 832px,#00a4b6 848px,#00a2b6 864px,#00a0b6 880px,#009db6 896px,#009ab6 912px,#0097b6 928px,#0093b6 944px,#008fb6 960px,#008bb6 976px)"></i><i style="top:192px;background:linear-gradient(90deg,#0099b6 0px,#009cb6 16px,#009fb6 32px,#00a1b6 48px,#00a4b6 64px,#00a7b6 80px,#00aab6 96px,#00acb6 112px,#00aeb6 128px,#01aeb5 144px,#02afb4 160px,#03afb3 176px,#04afb2 192px,#06afb1 208px,#07b0b0 224px,#07b0af 240px,#08b0af 256px,#08b0ae 272px,#09b0ae 288px,#0fb1a8 304px,#19b49e 320px,#24b793 336px,#30b887 352px,#39b77e 368px,#3fb779 384px,#44b673 400px,#49b66e 416px,#4fb669 432px,#54b564 448px,#58b55f 464px,#5cb45b 480px,#5eb459 496px,#60b458 512px,#5fb458 528px,#5db45a 544px,#5bb45d 560px,#57b560 576px,#52b565 592px,#4eb66a 608px,#49b66e 624px,#45b673 640px,#3bb77c 656px,#27b791 672px,#14b3a3 688px,#08b0ae 704px,#08b0af 720px,#07b0af 736px,#05afb2 752px,#01aeb5 768px,#00aab6 784px,#00a5b6 800px,#00a1b6 816px,#009fb6 832px,#009db6 848px,#009cb6 864px,#009ab6 880px,#0097b6 896px,#0094b6 912px,#0091b6 928px,#008db6 944px,#0089b6 960px,#0085b6 976px)"></i><i style="top:204px;background:linear-gradient(90deg,#0094b6 0px,#0097b6 16px,#009ab6 32px,#009db6 48px,#00a0b6 64px,#00a3b6 80px,#00a6b6 96px,#00a8b6 112px,#00abb6 128px,#00adb6 144px,#01aeb6 160px,#02aeb5 176px,#03afb4 192px,#04afb3 208px,#05afb1 224px,#07b0b0 240px,#07b0af 256px,#08b0af 272px,#09b0ae 288px,#0bb1ac 304px,#16b3a1 320px,#25b792 336px,#36b881 352px,#41b776 368px,#47b671 384px,#4cb66b 400px,#52b566 416px,#57b560 432px,#5db45b 448px,#61b456 464px,#65b452 480px,#67b450 496px,#68b44f 512px,#68b450 528px,#66b451 544px,#64b453 560px,#60b457 576px,#5cb45b 592px,#58b560 608px,#53b564 624px,#50b568 640px,#40b777 656px,#21b696 672px,#09b0ad 688px,#08b0af 704px,#07b0af 720px,#04afb2 736px,#00aeb6 752px,#00a7b6 768px,#00a1b6 784px,#009cb6 800px,#0099b6 816px,#0098b6 832px,#0097b6 848px,#0095b6 864px,#0093b6 880px,#0091b6 896px,#008eb6 912px,#008ab6 928px,#0086b6 944px,#0082b6 960px,#007eb6 976px)"></i><i style="top:216px;background:linear-gradient(90deg,#008fb6 0px,#0092b6 16px,#0095b6 32px,#0098b6 48px,#009cb6 64px,#009fb6 80px,#00a2b6 96px,#00a4b6 112px,#00a7b6 128px,#00a9b6 144px,#00abb6 160px,#00adb6 176px,#01aeb6 192px,#02aeb5 208px,#03afb3 224px,#05afb1 240px,#07b0b0 256px,#08b0af 272px,#08b0ae 288px,#09b0ae 304px,#11b2a6 320px,#24b693 336px,#3db77a 352px,#4cb66b 368px,#51b566 384px,#57b560 400px,#5db45b 416px,#62b455 432px,#67b450 448px,#6bb44d 464px,#6eb44a 480px,#70b448 496px,#71b447 512px,#71b448 528px,#70b449 544px,#6eb44b 560px,#6bb44d 576px,#68b44f 592px,#65b452 608px,#62b455 624px,#5fb458 640px,#3fb778 656px,#11b2a6 672px,#08b0ae 688px,#06b0b0 704px,#03afb4 720px,#00acb6 736px,#00a4b6 752px,#009db6 768px,#0097b6 784px,#0093b6 800px,#0091b6 816px,#0090b6 832px,#008fb6 848px,#008eb6 864px,#008db6 880px,#008ab6 896px,#0087b6 912px,#0084b6 928px,#0080b6 944px,#007cb6 960px,#0078b6 976px)"></i><i style="top:228px;background:linear-gradient(90deg,#0089b6 0px,#008db6 16px,#0090b6 32px,#0093b6 48px,#0097b6 64px,#009ab6 80px,#009db6 96px,#00a0b6 112px,#00a3b6 128px,#00a5b6 144px,#00a7b6 160px,#00a8b6 176px,#00aab6 192px,#00adb6 208px,#01aeb6 224px,#03afb4 240px,#05afb2 256px,#07b0b0 272px,#08b0af 288px,#09b0ae 304px,#09b0ae 320px,#1eb599 336px,#44b774 352px,#5bb45c 368px,#60b457 384px,#66b452 400px,#6ab44e 416px,#6eb44a 432px,#73b446 448px,#76b443 464px,#7ab440 480px,#7cb43e 496px,#7db43d 512px,#7db43d 528px,#7cb43e 544px,#7ab43f 560px,#79b441 576px,#77b443 592px,#75b444 608px,#73b446 624px,#72b447 640px,#22b695 656px,#08b0af 672px,#03afb3 688px,#00aeb6 704px,#00a8b6 720px,#00a1b6 736px,#0098b6 752px,#0091b6 768px,#008cb6 784px,#0089b6 800px,#0088b6 816px,#0088b6 832px,#0088b6 848px,#0087b6 864px,#0086b6 880px,#0084b6 896px,#0081b6 912px,#007db6 928px,#0079b6 944px,#0075b6 960px,#0071b6 976px)"></i><i style="top:240px;background:linear-gradient(90deg,#0084b6 0px,#0087b6 16px,#008bb6 32px,#008eb6 48px,#0092b6 64px,#0095b6 80px,#0098b6 96px,#009bb6 112px,#009eb6 128px,#00a0b6 144px,#00a2b6 160px,#00a3b6 176px,#00a5b6 192px,#00a7b6 208px,#00a9b6 224px,#00adb6 240px,#01aeb5 256px,#04afb3 272px,#06afb1 288px,#08b0af 304px,#09b0ae 320px,#0ab0ad 336px,#42b775 352px,#6eb44a 368px,#72b447 384px,#76b443 400px,#7ab440 416px,#7eb43c 432px,#82b439 448px,#85b436 464px,#88b433 480px,#8ab431 496px,#8cb430 512px,#8cb430 528px,#8cb430 544px,#8cb430 560px,#8cb431 576px,#8bb431 592px,#8cb430 608px,#8cb430 624px,#89b433 640px,#009eb6 656px,#00a2b6 672px,#00a5b6 688px,#00a3b6 704px,#009db6 720px,#0094b6 736px,#008cb6 752px,#0085b6 768px,#0080b6 784px,#007eb6 800px,#007eb6 816px,#007fb6 832px,#0080b6 848px,#0080b6 864px,#007fb6 880px,#007db6 896px,#007ab6 912px,#0076b6 928px,#0073b6 944px,#006fb6 960px,#006bb6 976px)"></i><i style="top:252px;background:linear-gradient(90deg,#007eb6 0px,#0082b6 16px,#0085b6 32px,#0089b6 48px,#008db6 64px,#0090b6 80px,#0093b6 96px,#0096b6 112px,#0099b6 128px,#009bb6 144px,#009cb6 160px,#009db6 176px,#009eb6 192px,#00a0b6 208px,#00a2b6 224px,#00a5b6 240px,#00a8b6 256px,#00acb6 272px,#01aeb6 288px,#02aeb5 304px,#02aeb5 320px,#03afb4 336px,#0ab0ac 352px,#86b435 368px,#8ab432 384px,#8eb42f 400px,#91b42c 416px,#94b428 432px,#97b425 448px,#9ab522 464px,#9cb51f 480px,#9eb51d 496px,#9fb61c 512px,#9eb51c 528px,#9eb51d 544px,#9db51d 560px,#9db51e 576px,#9db51e 592px,#9cb51f 608px,#9bb520 624px,#005eb6 640px,#008cb6 656px,#009bb6 672px,#009db6 688px,#0099b6 704px,#0091b6 720px,#0087b6 736px,#007eb6 752px,#0077b6 768px,#0074b6 784px,#0073b6 800px,#0074b6 816px,#0076b6 832px,#0078b6 848px,#0078b6 864px,#0078b6 880px,#0076b6 896px,#0073b6 912px,#0070b6 928px,#006cb6 944px,#0068b6 960px,#0064b6 976px)"></i><i style="top:264px;background:linear-gradient(90deg,#0078b6 0px,#007cb6 16px,#0080b6 32px,#0083b6 48px,#0087b6 64px,#008bb6 80px,#008eb6 96px,#0091b6 112px,#0094b6 128px,#0095b6 144px,#0096b6 160px,#0097b6 176px,#0097b6 192px,#0098b6 208px,#0099b6 224px,#009cb6 240px,#009fb6 256px,#00a3b6 272px,#00a6b6 288px,#00a7b6 304px,#00a3b6 320px,#0097b6 336px,#0078b6 352px,#9cb51f 368px,#9cb51e 384px,#9db51e 400px,#9db51d 416px,#9eb51d 432px,#9eb51c 448px,#9eb61c 464px,#9fb61c 480px,#9fb61c 496px,#9fb61c 512px,#9eb51c 528px,#9eb51d 544px,#9db51d 560px,#9db51e 576px,#9cb51e 592px,#9cb51f 608px,#0060b6 624px,#0064b6 640px,#0089b6 656px,#0095b6 672px,#0094b6 688px,#008eb6 704px,#0084b6 720px,#0079b6 736px,#006fb6 752px,#0069b6 768px,#0066b6 784px,#0067b6 800px,#006ab6 816px,#006db6 832px,#0070b6 848px,#0071b6 864px,#0071b6 880px,#006fb6 896px,#006db6 912px,#0069b6 928px,#0066b6 944px,#0062b6 960px,#005eb6 976px)"></i><i style="top:276px;background:linear-gradient(90deg,#0073b6 0px,#0076b6 16px,#007ab6 32px,#007eb6 48px,#0082b6 64px,#0085b6 80px,#0089b6 96px,#008bb6 112px,#008eb6 128px,#008fb6 144px,#0090b6 160px,#0090b6 176px,#008fb6 192px,#008fb6 208px,#0090b6 224px,#0092b6 240px,#0095b6 256px,#0099b6 272px,#009db6 288px,#009fb6 304px,#009cb6 320px,#0091b6 336px,#0075b6 352px,#0053b6 368px,#9cb51f 384px,#9db51e 400px,#9db51d 416px,#9eb51d 432px,#9eb51c 448px,#9eb61c 464px,#9fb61c 480px,#9fb61c 496px,#9eb61c 512px,#9eb51c 528px,#9eb51d 544px,#9db51d 560px,#9db51e 576px,#9cb51e 592px,#9cb51f 608px,#0063b6 624px,#0068b6 640px,#0086b6 656px,#008db6 672px,#008ab6 688px,#0080b6 704px,#0075b6 720px,#0069b6 736px,#0060b6 752px,#005ab6 768px,#0059b6 784px,#005bb6 800px,#0060b6 816px,#0064b6 832px,#0068b6 848px,#006ab6 864px,#006ab6 880px,#0069b6 896px,#0066b6 912px,#0063b6 928px,#0060b6 944px,#005cb6 960px,#0059b6 976px)"></i><i style="top:288px;background:linear-gradient(90deg,#006db6 0px,#0071b6 16px,#0074b6 32px,#0078b6 48px,#007cb6 64px,#0080b6 80px,#0083b6 96px,#0086b6 112px,#0088b6 128px,#0089b6 144px,#0089b6 160px,#0088b6 176px,#0087b6 192px,#0086b6 208px,#0085b6 224px,#0087b6 240px,#008ab6 256px,#008eb6 272px,#0093b6 288px,#0096b6 304px,#0094b6 320px,#008bb6 336px,#0071b6 352px,#0056b6 368px,#0061b6 384px,#9db51e 400px,#9db51d 416px,#9eb51d 432px,#9eb51c 448px,#9eb61c 464px,#9fb61c 480px,#9fb61c 496px,#9eb61c 512px,#9eb51c 528px,#9eb51d 544px,#9db51d 560px,#9db51e 576px,#9cb51f 592px,#006cb6 608px,#0064b6 624px,#0069b6 640px,#0080b6 656px,#0084b6 672px,#007db6 688px,#0072b6 704px,#0064b6 720px,#0058b6 736px,#0052b6 752px,#0050b6 768px,#0050b6 784px,#0052b6 800px,#0056b6 816px,#005cb6 832px,#0060b6 848px,#0063b6 864px,#0064b6 880px,#0063b6 896px,#0061b6 912px,#005eb6 928px,#005ab6 944px,#0057b6 960px,#0054b6 976px)"></i><i style="top:300px;background:linear-gradient(90deg,#0067b6 0px,#006bb6 16px,#006fb6 32px,#0073b6 48px,#0076b6 64px,#007ab6 80px,#007db6 96px,#0080b6 112px,#0082b6 128px,#0082b6 144px,#0082b6 160px,#0080b6 176px,#007eb6 192px,#007bb6 208px,#007ab6 224px,#007bb6 240px,#007db6 256px,#0082b6 272px,#0087b6 288px,#008bb6 304px,#008bb6 320px,#0084b6 336px,#006cb6 352px,#0059b6 368px,#0065b6 384px,#9db51e 400px,#9db51d 416px,#9eb51d 432px,#9eb51c 448px,#9eb61c 464px,#9fb61c 480px,#9fb61c 496px,#9eb61c 512px,#9eb51c 528px,#9eb51d 544px,#9db51d 560px,#9db51e 576px,#0073b6 592px,#006db6 608px,#0064b6 624px,#0069b6 640px,#007ab6 656px,#0079b6 672px,#006fb6 688px,#0061b6 704px,#0054b6 720px,#004eb6 736px,#004ab6 752px,#0048b6 768px,#004ab6 784px,#004db6 800px,#0050b6 816px,#0054b6 832px,#0059b6 848px,#005cb6 864px,#005eb6 880px,#005db6 896px,#005bb6 912px,#0058b6 928px,#0055b6 944px,#0053b6 960px,#0052b6 976px)"></i><i style="top:312px;background:linear-gradient(90deg,#0062b6 0px,#0065b6 16px,#0069b6 32px,#006db6 48px,#0071b6 64px,#0074b6 80px,#0077b6 96px,#007ab6 112px,#007bb6 128px,#007bb6 144px,#007ab6 160px,#0077b6 176px,#0074b6 192px,#0070b6 208px,#006eb6 224px,#006db6 240px,#0070b6 256px,#0074b6 272px,#007ab6 288px,#0080b6 304px,#0082b6 320px,#007cb6 336px,#0068b6 352px,#005bb6 368px,#0067b6 384px,#006fb6 400px,#9db51e 416px,#9eb51d 432px,#9eb51c 448px,#9eb61c 464px,#9fb61c 480px,#9fb61c 496px,#9eb61c 512px,#9eb51c 528px,#9eb51d 544px,#9db51d 560px,#9db51e 576px,#0074b6 592px,#006db6 608px,#0064b6 624px,#0068b6 640px,#0072b6 656px,#006db6 672px,#0060b6 688px,#0052b6 704px,#004bb6 720px,#0045b6 736px,#0042b6 752px,#0041b6 768px,#0044b6 784px,#0048b6 800px,#004cb6 816px,#0050b6 832px,#0054b6 848px,#0057b6 864px,#0058b6 880px,#0058b6 896px,#0056b6 912px,#0054b6 928px,#0053b6 944px,#0051b6 960px,#004fb6 976px)"></i><i style="top:324px;background:linear-gradient(90deg,#005cb6 0px,#0060b6 16px,#0064b6 32px,#0068b6 48px,#006bb6 64px,#006eb6 80px,#0071b6 96px,#0074b6 112px,#0075b6 128px,#0074b6 144px,#0072b6 160px,#006eb6 176px,#006ab6 192px,#0065b6 208px,#0061b6 224px,#005fb6 240px,#0061b6 256px,#0066b6 272px,#006cb6 288px,#0073b6 304px,#0077b6 320px,#0074b6 336px,#0063b6 352px,#005db6 368px,#0068b6 384px,#0071b6 400px,#0076b6 416px,#9eb51d 432px,#9eb51c 448px,#9eb61c 464px,#9fb61c 480px,#9fb61c 496px,#9eb61c 512px,#9eb51c 528px,#9eb51d 544px,#9db51d 560px,#0078b6 576px,#0074b6 592px,#006db6 608px,#0063b6 624px,#0065b6 640px,#0068b6 656px,#005fb6 672px,#0052b6 688px,#004ab6 704px,#0042b6 720px,#003db6 736px,#003ab6 752px,#003bb6 768px,#003eb6 784px,#0043b6 800px,#0049b6 816px,#004db6 832px,#0051b6 848px,#0053b6 864px,#0054b6 880px,#0054b6 896px,#0053b6 912px,#0052b6 928px,#0051b6 944px,#004fb6 960px,#004eb6 976px)"></i><i style="top:336px;background:linear-gradient(90deg,#0057b6 0px,#005bb6 16px,#005fb6 32px,#0062b6 48px,#0066b6 64px,#0069b6 80px,#006cb6 96px,#006db6 112px,#006eb6 128px,#006db6 144px,#006ab6 160px,#0065b6 176px,#005fb6 192px,#0059b6 208px,#0054b6 224px,#0053b6 240px,#0053b6 256px,#0056b6 272px,#005eb6 288px,#0066b6 304px,#006bb6 320px,#006bb6 336px,#005eb6 352px,#005eb6 368px,#0069b6 384px,#0072b6 400px,#0077b6 416px,#9eb51d 432px,#9eb51c 448px,#9eb61c 464px,#9fb61c 480px,#9fb61c 496px,#9eb61c 512px,#9eb51c 528px,#9eb51d 544px,#007bb6 560px,#0078b6 576px,#0074b6 592px,#006db6 608px,#0063b6 624px,#0062b6 640px,#005fb6 656px,#0053b6 672px,#004bb6 688px,#0042b6 704px,#003ab6 720px,#0035b6 736px,#0034b6 752px,#0036b6 768px,#003ab6 784px,#0040b6 800px,#0046b6 816px,#004bb6 832px,#004fb6 848px,#0051b6 864px,#0052b6 880px,#0052b6 896px,#0052b6 912px,#0051b6 928px,#004fb6 944px,#004eb6 960px,#004cb6 976px)"></i><i style="top:348px;background:linear-gradient(90deg,#0054b6 0px,#0056b6 16px,#005ab6 32px,#005db6 48px,#0061b6 64px,#0064b6 80px,#0066b6 96px,#0068b6 112px,#0068b6 128px,#0066b6 144px,#0062b6 160px,#005cb6 176px,#0055b6 192px,#0050b6 208px,#004db6 224px,#004bb6 240px,#004bb6 256px,#004db6 272px,#0051b6 288px,#0057b6 304px,#0060b6 320px,#0062b6 336px,#005ab6 352px,#005eb6 368px,#006ab6 384px,#0072b6 400px,#0078b6 416px,#007cb6 432px,#9eb51c 448px,#9eb61c 464px,#9fb61c 480px,#9fb61c 496px,#9eb61c 512px,#9eb51c 528px,#9eb51d 544px,#007cb6 560px,#0078b6 576px,#0073b6 592px,#006cb6 608px,#0062b6 624px,#005db6 640px,#0055b6 656px,#004db6 672px,#0043b6 688px,#003ab6 704px,#0033b6 720px,#002fb6 736px,#002fb6 752px,#0031b6 768px,#0037b6 784px,#003db6 800px,#0044b6 816px,#0049b6 832px,#004db6 848px,#0050b6 864px,#0051b6 880px,#0051b6 896px,#0051b6 912px,#0050b6 928px,#004eb6 944px,#004db6 960px,#004bb6 976px)"></i><i style="top:360px;background:linear-gradient(90deg,#0051b6 0px,#0053b6 16px,#0055b6 32px,#0059b6 48px,#005cb6 64px,#005fb6 80px,#0061b6 96px,#0062b6 112px,#0062b6 128px,#005fb6 144px,#005bb6 160px,#0054b6 176px,#004fb6 192px,#004bb6 208px,#0046b6 224px,#0044b6 240px,#0043b6 256px,#0045b6 272px,#004ab6 288px,#004fb6 304px,#0054b6 320px,#005ab6 336px,#0057b6 352px,#005fb6 368px,#006ab6 384px,#0073b6 400px,#0078b6 416px,#007cb6 432px,#9eb51c 448px,#9eb61c 464px,#9fb61c 480px,#9fb61c 496px,#9eb61c 512px,#9eb51c 528px,#007eb6 544px,#007cb6 560px,#0078b6 576px,#0073b6 592px,#006cb6 608px,#0061b6 624px,#0059b6 640px,#0050b6 656px,#0047b6 672px,#003db6 688px,#0035b6 704px,#002eb6 720px,#002ab6 736px,#002bb6 752px,#002eb6 768px,#0034b6 784px,#003cb6 800px,#0042b6 816px,#0048b6 832px,#004cb6 848px,#004fb6 864px,#0050b6 880px,#0050b6 896px,#0050b6 912px,#004fb6 928px,#004eb6 944px,#004cb6 960px,#004bb6 976px)"></i><i style="top:372px;background:linear-gradient(90deg,#004fb6 0px,#0051b6 16px,#0053b6 32px,#0055b6 48px,#0058b6 64px,#005ab6 80px,#005cb6 96px,#005db6 112px,#005cb6 128px,#0059b6 144px,#0054b6 160px,#0050b6 176px,#004ab6 192px,#0045b6 208px,#0040b6 224px,#003db6 240px,#003cb6 256px,#003eb6 272px,#0042b6 288px,#0048b6 304px,#004eb6 320px,#0053b6 336px,#0055b6 352px,#0060b6 368px,#006bb6 384px,#0073b6 400px,#0078b6 416px,#007cb6 432px,#007eb6 448px,#9eb61c 464px,#9fb61c 480px,#9fb61c 496px,#9eb61c 512px,#007fb6 528px,#007eb6 544px,#007bb6 560px,#0078b6 576px,#0073b6 592px,#006bb6 608px,#0060b6 624px,#0055b6 640px,#004db6 656px,#0043b6 672px,#0039b6 688px,#0031b6 704px,#002ab6 720px,#0028b6 736px,#0029b6 752px,#002db6 768px,#0034b6 784px,#003bb6 800px,#0042b6 816px,#0048b6 832px,#004cb6 848px,#004fb6 864px,#0050b6 880px,#0050b6 896px,#0050b6 912px,#004fb6 928px,#004db6 944px,#004cb6 960px,#004ab6 976px)"></i><i style="top:384px;background:linear-gradient(90deg,#004eb6 0px,#004fb6 16px,#0051b6 32px,#0053b6 48px,#0054b6 64px,#0056b6 80px,#0058b6 96px,#0059b6 112px,#0057b6 128px,#0054b6 144px,#0051b6 160px,#004cb6 176px,#0046b6 192px,#0040b6 208px,#003ab6 224px,#0036b6 240px,#0035b6 256px,#0037b6 272px,#003cb6 288px,#0042b6 304px,#0049b6 320px,#0050b6 336px,#0054b6 352px,#0060b6 368px,#006bb6 384px,#0073b6 400px,#0079b6 416px,#007cb6 432px,#007eb6 448px,#0080b6 464px,#9fb61c 480px,#9fb61c 496px,#9eb61c 512px,#007fb6 528px,#007eb6 544px,#007bb6 560px,#0078b6 576px,#0072b6 592px,#006bb6 608px,#0060b6 624px,#0053b6 640px,#004ab6 656px,#0041b6 672px,#0037b6 688px,#002fb6 704px,#0029b6 720px,#0027b6 736px,#0029b6 752px,#002db6 768px,#0034b6 784px,#003cb6 800px,#0043b6 816px,#0049b6 832px,#004db6 848px,#004fb6 864px,#0050b6 880px,#0050b6 896px,#0050b6 912px,#004fb6 928px,#004db6 944px,#004cb6 960px,#004ab6 976px)"></i><i style="top:396px;background:linear-gradient(90deg,#004cb6 0px,#004eb6 16px,#0050b6 32px,#0051b6 48px,#0053b6 64px,#0054b6 80px,#0054b6 96px,#0055b6 112px,#0054b6 128px,#0051b6 144px,#004eb6 160px,#0048b6 176px,#0042b6 192px,#003bb6 208px,#0035b6 224px,#0031b6 240px,#002fb6 256px,#0031b6 272px,#0036b6 288px,#003db6 304px,#0046b6 320px,#004db6 336px,#0054b6 352px,#0061b6 368px,#006cb6 384px,#0073b6 400px,#0079b6 416px,#007cb6 432px,#007fb6 448px,#0080b6 464px,#9fb61c 480px,#9fb61c 496px,#0080b6 512px,#007fb6 528px,#007eb6 544px,#007bb6 560px,#0078b6 576px,#0072b6 592px,#006ab6 608px,#005fb6 624px,#0053b6 640px,#004ab6 656px,#0040b6 672px,#0037b6 688px,#002fb6 704px,#002ab6 720px,#0028b6 736px,#002ab6 752px,#002fb6 768px,#0036b6 784px,#003db6 800px,#0044b6 816px,#004ab6 832px,#004eb6 848px,#0050b6 864px,#0051b6 880px,#0051b6 896px,#0050b6 912px,#004fb6 928px,#004eb6 944px,#004db6 960px,#004bb6 976px)"></i><i style="top:408px;background:linear-gradient(90deg,#004bb6 0px,#004db6 16px,#004fb6 32px,#0050b6 48px,#0051b6 64px,#0052b6 80px,#0053b6 96px,#0053b6 112px,#0052b6 128px,#004fb6 144px,#004bb6 160px,#0046b6 176px,#003fb6 192px,#0038b6 208px,#0031b6 224px,#002db6 240px,#002bb6 256px,#002db6 272px,#0032b6 288px,#003ab6 304px,#0043b6 320px,#004cb6 336px,#0054b6 352px,#0061b6 368px,#006cb6 384px,#0074b6 400px,#0079b6 416px,#007cb6 432px,#007fb6 448px,#0080b6 464px,#0081b6 480px,#0081b6 496px,#0080b6 512px,#007fb6 528px,#007eb6 544px,#007bb6 560px,#0077b6 576px,#0072b6 592px,#006ab6 608px,#005eb6 624px,#0053b6 640px,#004bb6 656px,#0042b6 672px,#0039b6 688px,#0032b6 704px,#002db6 720px,#002cb6 736px,#002db6 752px,#0032b6 768px,#0039b6 784px,#0040b6 800px,#0046b6 816px,#004cb6 832px,#004fb6 848px,#0052b6 864px,#0052b6 880px,#0052b6 896px,#0052b6 912px,#0050b6 928px,#004fb6 944px,#004eb6 960px,#004cb6 976px)"></i><i style="top:420px;background:linear-gradient(90deg,#004bb6 0px,#004cb6 16px,#004eb6 32px,#004fb6 48px,#0051b6 64px,#0052b6 80px,#0052b6 96px,#0052b6 112px,#0051b6 128px,#004eb6 144px,#004ab6 160px,#0044b6 176px,#003db6 192px,#0035b6 208px,#002eb6 224px,#002ab6 240px,#0029b6 256px,#002bb6 272px,#0031b6 288px,#0039b6 304px,#0042b6 320px,#004cb6 336px,#0054b6 352px,#0062b6 368px,#006db6 384px,#0074b6 400px,#0079b6 416px,#007cb6 432px,#007fb6 448px,#0080b6 464px,#9fb61c 480px,#9fb61c 496px,#0080b6 512px,#007fb6 528px,#007db6 544px,#007bb6 560px,#0077b6 576px,#0072b6 592px,#0069b6 608px,#005eb6 624px,#0055b6 640px,#004eb6 656px,#0046b6 672px,#003eb6 688px,#0037b6 704px,#0032b6 720px,#0030b6 736px,#0032b6 752px,#0036b6 768px,#003db6 784px,#0043b6 800px,#0049b6 816px,#004eb6 832px,#0052b6 848px,#0053b6 864px,#0054b6 880px,#0054b6 896px,#0053b6 912px,#0052b6 928px,#0050b6 944px,#004fb6 960px,#004db6 976px)"></i><i style="top:432px;background:linear-gradient(90deg,#004ab6 0px,#004cb6 16px,#004db6 32px,#004fb6 48px,#0050b6 64px,#0051b6 80px,#0052b6 96px,#0051b6 112px,#0050b6 128px,#004db6 144px,#0049b6 160px,#0043b6 176px,#003bb6 192px,#0034b6 208px,#002db6 224px,#0029b6 240px,#0028b6 256px,#002bb6 272px,#0031b6 288px,#0039b6 304px,#0043b6 320px,#004db6 336px,#0055b6 352px,#0063b6 368px,#006db6 384px,#0074b6 400px,#0079b6 416px,#007db6 432px,#007fb6 448px,#0080b6 464px,#9fb61c 480px,#9fb61c 496px,#0080b6 512px,#007fb6 528px,#007db6 544px,#007bb6 560px,#0077b6 576px,#0071b6 592px,#0069b6 608px,#005db6 624px,#005ab6 640px,#0052b6 656px,#004bb6 672px,#0044b6 688px,#003db6 704px,#0038b6 720px,#0037b6 736px,#0038b6 752px,#003cb6 768px,#0041b6 784px,#0047b6 800px,#004db6 816px,#0051b6 832px,#0054b6 848px,#0057b6 864px,#0058b6 880px,#0057b6 896px,#0055b6 912px,#0054b6 928px,#0052b6 944px,#0050b6 960px,#004fb6 976px)"></i><i style="top:444px;background:linear-gradient(90deg,#004ab6 0px,#004cb6 16px,#004db6 32px,#004fb6 48px,#0050b6 64px,#0051b6 80px,#0052b6 96px,#0051b6 112px,#0050b6 128px,#004db6 144px,#0048b6 160px,#0042b6 176px,#003bb6 192px,#0034b6 208px,#002eb6 224px,#002ab6 240px,#0029b6 256px,#002db6 272px,#0033b6 288px,#003cb6 304px,#0046b6 320px,#004eb6 336px,#0056b6 352px,#0063b6 368px,#006eb6 384px,#0075b6 400px,#007ab6 416px,#007db6 432px,#007fb6 448px,#9eb61c 464px,#9fb61c 480px,#9fb61c 496px,#9eb61c 512px,#007fb6 528px,#007db6 544px,#007bb6 560px,#0077b6 576px,#0071b6 592px,#0068b6 608px,#005eb6 624px,#0061b6 640px,#005ab6 656px,#0051b6 672px,#004bb6 688px,#0044b6 704px,#0040b6 720px,#003eb6 736px,#003fb6 752px,#0042b6 768px,#0047b6 784px,#004cb6 800px,#0051b6 816px,#0055b6 832px,#005ab6 848px,#005cb6 864px,#005db6 880px,#005cb6 896px,#005ab6 912px,#0057b6 928px,#0054b6 944px,#0052b6 960px,#0051b6 976px)"></i><i style="top:456px;background:linear-gradient(90deg,#004bb6 0px,#004cb6 16px,#004eb6 32px,#004fb6 48px,#0051b6 64px,#0051b6 80px,#0052b6 96px,#0052b6 112px,#0050b6 128px,#004db6 144px,#0049b6 160px,#0043b6 176px,#003cb6 192px,#0035b6 208px,#0030b6 224px,#002db6 240px,#002db6 256px,#0031b6 272px,#0038b6 288px,#0041b6 304px,#004ab6 320px,#0051b6 336px,#0057b6 352px,#0064b6 368px,#006eb6 384px,#0075b6 400px,#007ab6 416px,#007db6 432px,#9eb51c 448px,#9eb61c 464px,#9fb61c 480px,#9fb61c 496px,#9eb61c 512px,#007fb6 528px,#007db6 544px,#007bb6 560px,#0077b6 576px,#0071b6 592px,#0068b6 608px,#005fb6 624px,#0068b6 640px,#0065b6 656px,#005cb6 672px,#0052b6 688px,#004cb6 704px,#0048b6 720px,#0046b6 736px,#0046b6 752px,#0048b6 768px,#004cb6 784px,#0051b6 800px,#0056b6 816px,#005cb6 832px,#0060b6 848px,#0062b6 864px,#0062b6 880px,#0061b6 896px,#005eb6 912px,#005bb6 928px,#0058b6 944px,#0055b6 960px,#0053b6 976px)"></i><i style="top:468px;background:linear-gradient(90deg,#004cb6 0px,#004db6 16px,#004fb6 32px,#0050b6 48px,#0051b6 64px,#0052b6 80px,#0053b6 96px,#0053b6 112px,#0051b6 128px,#004fb6 144px,#004ab6 160px,#0045b6 176px,#003eb6 192px,#0038b6 208px,#0033b6 224px,#0031b6 240px,#0032b6 256px,#0037b6 272px,#003eb6 288px,#0046b6 304px,#004eb6 320px,#0054b6 336px,#0058b6 352px,#0065b6 368px,#006fb6 384px,#0075b6 400px,#007ab6 416px,#007db6 432px,#9eb51c 448px,#9eb61c 464px,#9fb61c 480px,#9fb61c 496px,#9eb61c 512px,#9eb51c 528px,#007db6 544px,#007ab6 560px,#0076b6 576px,#0070b6 592px,#0067b6 608px,#0062b6 624px,#0070b6 640px,#0071b6 656px,#0069b6 672px,#005fb6 688px,#0054b6 704px,#0050b6 720px,#004eb6 736px,#004db6 752px,#004fb6 768px,#0052b6 784px,#0058b6 800px,#005fb6 816px,#0064b6 832px,#0067b6 848px,#0068b6 864px,#0068b6 880px,#0066b6 896px,#0063b6 912px,#0060b6 928px,#005db6 944px,#0059b6 960px,#0056b6 976px)"></i><i style="top:480px;background:linear-gradient(90deg,#004db6 0px,#004eb6 16px,#0050b6 32px,#0051b6 48px,#0053b6 64px,#0054b6 80px,#0054b6 96px,#0054b6 112px,#0053b6 128px,#0050b6 144px,#004cb6 160px,#0047b6 176px,#0041b6 192px,#003cb6 208px,#0038b6 224px,#0037b6 240px,#0039b6 256px,#003eb6 272px,#0045b6 288px,#004db6 304px,#0054b6 320px,#0058b6 336px,#0059b6 352px,#0066b6 368px,#006fb6 384px,#0076b6 400px,#007ab6 416px,#9eb51d 432px,#9eb51c 448px,#9eb61c 464px,#9fb61c 480px,#9fb61c 496px,#9eb61c 512px,#9eb51c 528px,#9eb51d 544px,#0079b6 560px,#0076b6 576px,#0070b6 592px,#0067b6 608px,#0065b6 624px,#0078b6 640px,#007bb6 656px,#0077b6 672px,#006eb6 688px,#0064b6 704px,#005cb6 720px,#0057b6 736px,#0055b6 752px,#0058b6 768px,#005cb6 784px,#0062b6 800px,#0068b6 816px,#006cb6 832px,#006eb6 848px,#006fb6 864px,#006eb6 880px,#006cb6 896px,#0069b6 912px,#0066b6 928px,#0062b6 944px,#005eb6 960px,#005bb6 976px)"></i><i style="top:492px;background:linear-gradient(90deg,#004eb6 0px,#0050b6 16px,#0052b6 32px,#0053b6 48px,#0054b6 64px,#0057b6 80px,#0058b6 96px,#0058b6 112px,#0056b6 128px,#0053b6 144px,#004fb6 160px,#004ab6 176px,#0045b6 192px,#0041b6 208px,#003eb6 224px,#003db6 240px,#0040b6 256px,#0046b6 272px,#004db6 288px,#0054b6 304px,#005db6 320px,#005db6 336px,#005ab6 352px,#0066b6 368px,#006fb6 384px,#0075b6 400px,#9db51e 416px,#9eb51d 432px,#9eb51c 448px,#9eb61c 464px,#9fb61c 480px,#9fb61c 496px,#9eb61c 512px,#9eb51c 528px,#9eb51d 544px,#0078b6 560px,#0074b6 576px,#006eb6 592px,#0066b6 608px,#0069b6 624px,#0080b6 640px,#0086b6 656px,#0083b6 672px,#007cb6 688px,#0073b6 704px,#006cb6 720px,#0066b6 736px,#0064b6 752px,#0065b6 768px,#0068b6 784px,#006db6 800px,#0071b6 816px,#0074b6 832px,#0075b6 848px,#0075b6 864px,#0074b6 880px,#0072b6 896px,#006fb6 912px,#006bb6 928px,#0068b6 944px,#0064b6 960px,#0060b6 976px)"></i><i style="top:504px;background:linear-gradient(90deg,#0050b6 0px,#0052b6 16px,#0053b6 32px,#0056b6 48px,#0059b6 64px,#005bb6 80px,#005cb6 96px,#005db6 112px,#005bb6 128px,#0057b6 144px,#0052b6 160px,#004eb6 176px,#004ab6 192px,#0046b6 208px,#0044b6 224px,#0045b6 240px,#0048b6 256px,#004eb6 272px,#0055b6 288px,#0061b6 304px,#0067b6 320px,#0061b6 336px,#005ab6 352px,#0067b6 368px,#006fb6 384px,#0075b6 400px,#9db51d 416px,#9eb51d 432px,#9eb51c 448px,#9eb61c 464px,#9fb61c 480px,#9fb61c 496px,#9eb61c 512px,#9eb51c 528px,#9eb51d 544px,#9db51d 560px,#0072b6 576px,#006db6 592px,#0064b6 608px,#006db6 624px,#0087b6 640px,#008fb6 656px,#008eb6 672px,#0089b6 688px,#0081b6 704px,#007ab6 720px,#0075b6 736px,#0072b6 752px,#0072b6 768px,#0074b6 784px,#0077b6 800px,#007ab6 816px,#007cb6 832px,#007db6 848px,#007cb6 864px,#007ab6 880px,#0078b6 896px,#0074b6 912px,#0071b6 928px,#006db6 944px,#0069b6 960px,#0066b6 976px)"></i><i style="top:516px;background:linear-gradient(90deg,#0052b6 0px,#0054b6 16px,#0057b6 32px,#005ab6 48px,#005db6 64px,#0060b6 80px,#0062b6 96px,#0062b6 112px,#0061b6 128px,#005db6 144px,#0058b6 160px,#0053b6 176px,#004fb6 192px,#004cb6 208px,#004cb6 224px,#004db6 240px,#0051b6 256px,#0059b6 272px,#0065b6 288px,#006eb6 304px,#0070b6 320px,#0064b6 336px,#005bb6 352px,#0067b6 368px,#006fb6 384px,#9db51e 400px,#9db51d 416px,#9eb51d 432px,#9eb51c 448px,#9eb61c 464px,#9fb61c 480px,#9fb61c 496px,#9eb61c 512px,#9eb51c 528px,#9eb51d 544px,#9db51d 560px,#9db51e 576px,#006ab6 592px,#0061b6 608px,#0070b6 624px,#008eb6 640px,#0097b6 656px,#0098b6 672px,#0094b6 688px,#008eb6 704px,#0088b6 720px,#0082b6 736px,#007fb6 752px,#007eb6 768px,#007eb6 784px,#0080b6 800px,#0082b6 816px,#0083b6 832px,#0083b6 848px,#0082b6 864px,#0080b6 880px,#007eb6 896px,#007ab6 912px,#0077b6 928px,#0073b6 944px,#006fb6 960px,#006bb6 976px)"></i><i style="top:528px;background:linear-gradient(90deg,#0055b6 0px,#0059b6 16px,#005cb6 32px,#005fb6 48px,#0063b6 64px,#0065b6 80px,#0067b6 96px,#0068b6 112px,#0067b6 128px,#0064b6 144px,#0060b6 160px,#005ab6 176px,#0055b6 192px,#0053b6 208px,#0053b6 224px,#0056b6 240px,#005eb6 256px,#0069b6 272px,#0073b6 288px,#007ab6 304px,#0078b6 320px,#0065b6 336px,#005bb6 352px,#0066b6 368px,#9cb51f 384px,#9db51e 400px,#9db51d 416px,#9eb51d 432px,#9eb51c 448px,#9eb61c 464px,#9fb61c 480px,#9fb61c 496px,#9eb61c 512px,#9eb51c 528px,#9eb51d 544px,#9db51d 560px,#9db51e 576px,#0066b6 592px,#005eb6 608px,#0074b6 624px,#0093b6 640px,#009fb6 656px,#00a1b6 672px,#009eb6 688px,#0099b6 704px,#0094b6 720px,#008eb6 736px,#008ab6 752px,#0089b6 768px,#0088b6 784px,#0089b6 800px,#008ab6 816px,#008bb6 832px,#008ab6 848px,#0089b6 864px,#0086b6 880px,#0083b6 896px,#0080b6 912px,#007db6 928px,#0079b6 944px,#0075b6 960px,#0071b6 976px)"></i><i style="top:540px;background:linear-gradient(90deg,#005ab6 0px,#005eb6 16px,#0062b6 32px,#0065b6 48px,#0069b6 64px,#006bb6 80px,#006eb6 96px,#006fb6 112px,#006eb6 128px,#006cb6 144px,#0069b6 160px,#0064b6 176px,#0061b6 192px,#005fb6 208px,#0061b6 224px,#0066b6 240px,#006eb6 256px,#0078b6 272px,#0081b6 288px,#0084b6 304px,#007fb6 320px,#0065b6 336px,#005ab6 352px,#0064b6 368px,#9cb51e 384px,#9db51e 400px,#9db51d 416px,#9eb51d 432px,#9eb51c 448px,#9eb61c 464px,#9fb61c 480px,#9fb61c 496px,#9fb61c 512px,#9eb51c 528px,#9eb51d 544px,#9db51d 560px,#9db51e 576px,#9cb51e 592px,#0059b6 608px,#0076b6 624px,#0099b6 640px,#00a5b6 656px,#00a8b6 672px,#00a7b6 688px,#00a3b6 704px,#009eb6 720px,#0099b6 736px,#0095b6 752px,#0093b6 768px,#0092b6 784px,#0091b6 800px,#0092b6 816px,#0091b6 832px,#0090b6 848px,#008fb6 864px,#008cb6 880px,#0089b6 896px,#0086b6 912px,#0082b6 928px,#007fb6 944px,#007bb6 960px,#0077b6 976px)"></i><i style="top:552px;background:linear-gradient(90deg,#0060b6 0px,#0064b6 16px,#0068b6 32px,#006bb6 48px,#006fb6 64px,#0072b6 80px,#0074b6 96px,#0076b6 112px,#0076b6 128px,#0074b6 144px,#0072b6 160px,#006fb6 176px,#006cb6 192px,#006cb6 208px,#006fb6 224px,#0075b6 240px,#007eb6 256px,#0086b6 272px,#008cb6 288px,#008db6 304px,#0084b6 320px,#0063b6 336px,#0058b6 352px,#9cb51f 368px,#9cb51e 384px,#9db51e 400px,#9db51d 416px,#9eb51d 432px,#9eb51c 448px,#9eb61c 464px,#9fb61c 480px,#9fb61c 496px,#9fb61c 512px,#9eb51c 528px,#9eb51d 544px,#9db51d 560px,#9db51e 576px,#9cb51e 592px,#0054b6 608px,#0079b6 624px,#009db6 640px,#00abb6 656px,#00aeb6 672px,#00aeb6 688px,#00acb6 704px,#00a7b6 720px,#00a3b6 736px,#009fb6 752px,#009cb6 768px,#009ab6 784px,#0099b6 800px,#0098b6 816px,#0098b6 832px,#0096b6 848px,#0094b6 864px,#0092b6 880px,#008fb6 896px,#008bb6 912px,#0088b6 928px,#0084b6 944px,#0081b6 960px,#007db6 976px)"></i><i style="top:564px;background:linear-gradient(90deg,#0066b6 0px,#006ab6 16px,#006eb6 32px,#0072b6 48px,#0075b6 64px,#0078b6 80px,#007bb6 96px,#007db6 112px,#007db6 128px,#007cb6 144px,#007bb6 160px,#0079b6 176px,#0078b6 192px,#0079b6 208px,#007db6 224px,#0083b6 240px,#008bb6 256px,#0092b6 272px,#0097b6 288px,#0095b6 304px,#0087b6 320px,#0060b6 336px,#9bb51f 352px,#9cb51f 368px,#9db51e 384px,#9db51e 400px,#9db51d 416px,#9eb51d 432px,#9eb51c 448px,#9fb61c 464px,#9fb61c 480px,#9fb61c 496px,#9fb61c 512px,#9eb51c 528px,#9eb51d 544px,#9bb520 560px,#98b523 576px,#95b427 592px,#92b42b 608px,#05afb2 624px,#00acb6 640px,#03afb4 656px,#04afb3 672px,#04afb3 688px,#03afb4 704px,#01aeb6 720px,#00abb6 736px,#00a7b6 752px,#00a4b6 768px,#00a1b6 784px,#00a0b6 800px,#009fb6 816px,#009db6 832px,#009cb6 848px,#009ab6 864px,#0097b6 880px,#0094b6 896px,#0091b6 912px,#008db6 928px,#008ab6 944px,#0086b6 960px,#0083b6 976px)"></i><i style="top:576px;background:linear-gradient(90deg,#006db6 0px,#0070b6 16px,#0074b6 32px,#0078b6 48px,#007cb6 64px,#007fb6 80px,#0082b6 96px,#0084b6 112px,#0085b6 128px,#0084b6 144px,#0084b6 160px,#0083b6 176px,#0083b6 192px,#0085b6 208px,#008ab6 224px,#0090b6 240px,#0097b6 256px,#009db6 272px,#009fb6 288px,#009bb6 304px,#008ab6 320px,#006bb6 336px,#97b424 352px,#96b426 368px,#94b428 384px,#93b429 400px,#93b42a 416px,#92b42a 432px,#92b42b 448px,#91b42b 464px,#91b42c 480px,#8fb42d 496px,#8db42f 512px,#8ab432 528px,#87b435 544px,#83b438 560px,#7fb43b 576px,#7bb43f 592px,#78b442 608px,#4ab66d 624px,#0ab0ad 640px,#09b0ad 656px,#08b0ae 672px,#07b0af 688px,#06afb1 704px,#04afb2 720px,#02aeb4 736px,#00aeb6 752px,#00abb6 768px,#00a8b6 784px,#00a6b6 800px,#00a4b6 816px,#00a3b6 832px,#00a1b6 848px,#009fb6 864px,#009cb6 880px,#0099b6 896px,#0096b6 912px,#0093b6 928px,#008fb6 944px,#008cb6 960px,#0088b6 976px)"></i><i style="top:588px;background:linear-gradient(90deg,#0073b6 0px,#0077b6 16px,#007bb6 32px,#007fb6 48px,#0082b6 64px,#0086b6 80px,#0089b6 96px,#008bb6 112px,#008cb6 128px,#008cb6 144px,#008cb6 160px,#008cb6 176px,#008eb6 192px,#0091b6 208px,#0096b6 224px,#009cb6 240px,#00a3b6 256px,#00a8b6 272px,#00acb6 288px,#02aeb5 304px,#09b0ad 320px,#76b443 336px,#7ab440 352px,#7bb43f 368px,#7cb43e 384px,#7db43d 400px,#7eb43c 416px,#80b43b 432px,#81b43a 448px,#81b43a 464px,#81b43a 480px,#7fb43b 496px,#7db43d 512px,#7ab440 528px,#76b443 544px,#72b447 560px,#6eb44b 576px,#69b44e 592px,#65b452 608px,#4eb669 624px,#20b697 640px,#09b0ad 656px,#09b0ae 672px,#08b0ae 688px,#08b0af 704px,#07b0b0 720px,#05afb2 736px,#03afb3 752px,#01aeb5 768px,#00aeb6 784px,#00abb6 800px,#00a9b6 816px,#00a8b6 832px,#00a6b6 848px,#00a3b6 864px,#00a1b6 880px,#009eb6 896px,#009bb6 912px,#0098b6 928px,#0094b6 944px,#0091b6 960px,#008eb6 976px)"></i><i style="top:600px;background:linear-gradient(90deg,#0079b6 0px,#007db6 16px,#0081b6 32px,#0085b6 48px,#0089b6 64px,#008cb6 80px,#008fb6 96px,#0091b6 112px,#0093b6 128px,#0094b6 144px,#0094b6 160px,#0095b6 176px,#0098b6 192px,#009cb6 208px,#00a1b6 224px,#00a8b6 240px,#00aeb6 256px,#04afb3 272px,#07b0af 288px,#09b0ae 304px,#31b886 320px,#64b453 336px,#66b451 352px,#68b44f 368px,#6bb44d 384px,#6db44b 400px,#70b449 416px,#72b447 432px,#74b445 448px,#75b445 464px,#74b445 480px,#73b446 496px,#71b448 512px,#6db44b 528px,#6ab44e 544px,#65b452 560px,#60b457 576px,#5bb45d 592px,#55b562 608px,#47b671 624px,#29b88e 640px,#14b3a3 656px,#09b0ad 672px,#09b0ae 688px,#08b0af 704px,#07b0af 720px,#07b0b0 736px,#05afb1 752px,#04afb3 768px,#02afb4 784px,#01aeb6 800px,#00aeb6 816px,#00acb6 832px,#00aab6 848px,#00a8b6 864px,#00a5b6 880px,#00a2b6 896px,#00a0b6 912px,#009cb6 928px,#0099b6 944px,#0096b6 960px,#0093b6 976px)"></i><i style="top:612px;background:linear-gradient(90deg,#0080b6 0px,#0084b6 16px,#0088b6 32px,#008bb6 48px,#008fb6 64px,#0093b6 80px,#0096b6 96px,#0098b6 112px,#009ab6 128px,#009bb6 144px,#009cb6 160px,#009eb6 176px,#00a1b6 192px,#00a6b6 208px,#00acb6 224px,#02afb4 240px,#06afb1 256px,#08b0ae 272px,#09b0ae 288px,#19b49e 304px,#3bb77c 320px,#53b565 336px,#56b561 352px,#59b55e 368px,#5db45a 384px,#61b456 400px,#65b452 416px,#68b450 432px,#6ab44e 448px,#6bb44d 464px,#6bb44d 480px,#69b44e 496px,#67b450 512px,#64b454 528px,#5fb458 544px,#5ab55d 560px,#54b563 576px,#4fb668 592px,#49b66e 608px,#3fb779 624px,#2ab88d 640px,#1ab49d 656px,#0db1a9 672px,#09b0ae 688px,#08b0ae 704px,#08b0af 720px,#07b0af 736px,#07b0b0 752px,#06afb1 768px,#04afb2 784px,#03afb4 800px,#02aeb5 816px,#01aeb6 832px,#00aeb6 848px,#00acb6 864px,#00a9b6 880px,#00a7b6 896px,#00a4b6 912px,#00a1b6 928px,#009eb6 944px,#009bb6 960px,#0098b6 976px)"></i><i style="top:624px;background:linear-gradient(90deg,#0086b6 0px,#008ab6 16px,#008eb6 32px,#0092b6 48px,#0095b6 64px,#0099b6 80px,#009cb6 96px,#009eb6 112px,#00a0b6 128px,#00a2b6 144px,#00a3b6 160px,#00a6b6 176px,#00a9b6 192px,#00aeb6 208px,#03afb3 224px,#06afb0 240px,#08b0af 256px,#09b0ae 272px,#0eb1a8 288px,#22b695 304px,#39b77e 320px,#46b671 336px,#4ab66d 352px,#4eb669 368px,#52b565 384px,#57b560 400px,#5bb45c 416px,#5eb459 432px,#61b456 448px,#62b455 464px,#62b455 480px,#61b457 496px,#5eb459 512px,#5ab55d 528px,#56b562 544px,#51b567 560px,#4bb66c 576px,#46b671 592px,#41b776 608px,#38b87f 624px,#2ab88e 640px,#1db59a 656px,#12b2a5 672px,#0ab0ad 688px,#09b0ae 704px,#08b0ae 720px,#08b0af 736px,#07b0b0 752px,#06b0b0 768px,#06afb1 784px,#04afb2 800px,#03afb3 816px,#02afb4 832px,#02aeb5 848px,#00aeb6 864px,#00adb6 880px,#00aab6 896px,#00a8b6 912px,#00a5b6 928px,#00a2b6 944px,#00a0b6 960px,#009db6 976px)"></i><i style="top:636px;background:linear-gradient(90deg,#008cb6 0px,#0090b6 16px,#0094b6 32px,#0098b6 48px,#009bb6 64px,#009eb6 80px,#00a1b6 96px,#00a4b6 112px,#00a6b6 128px,#00a8b6 144px,#00aab6 160px,#00adb6 176px,#01aeb5 192px,#04afb3 208px,#06b0b0 224px,#08b0af 240px,#09b0ae 256px,#09b0ae 272px,#16b3a1 288px,#25b792 304px,#34b883 320px,#3db77a 336px,#41b776 352px,#46b671 368px,#4ab66d 384px,#4fb668 400px,#53b564 416px,#56b561 432px,#59b55f 448px,#5ab55d 464px,#5ab55d 480px,#58b55f 496px,#56b561 512px,#52b565 528px,#4eb669 544px,#49b66e 560px,#44b673 576px,#3fb778 592px,#3ab77d 608px,#32b885 624px,#28b78f 640px,#1eb599 656px,#15b3a2 672px,#0db1a9 688px,#09b0ae 704px,#09b0ae 720px,#08b0af 736px,#08b0af 752px,#07b0b0 768px,#06b0b0 784px,#06afb1 800px,#05afb2 816px,#04afb3 832px,#03afb4 848px,#02aeb4 864px,#01aeb5 880px,#00aeb6 896px,#00acb6 912px,#00a9b6 928px,#00a7b6 944px,#00a4b6 960px,#00a1b6 976px)"></i><i style="top:648px;background:linear-gradient(90deg,#0093b6 0px,#0096b6 16px,#009ab6 32px,#009db6 48px,#00a1b6 64px,#00a4b6 80px,#00a7b6 96px,#00a9b6 112px,#00abb6 128px,#00adb6 144px,#01aeb6 160px,#02afb4 176px,#04afb2 192px,#07b0b0 208px,#08b0af 224px,#08b0ae 240px,#09b0ae 256px,#0eb1a8 272px,#19b49e 288px,#25b792 304px,#30b888 320px,#36b881 336px,#3bb77c 352px,#3fb778 368px,#44b673 384px,#48b66f 400px,#4cb66b 416px,#4fb568 432px,#52b566 448px,#53b564 464px,#53b564 480px,#52b566 496px,#4fb568 512px,#4cb66b 528px,#48b66f 544px,#43b774 560px,#3fb779 576px,#3ab77d 592px,#35b882 608px,#2eb889 624px,#26b791 640px,#1eb599 656px,#16b3a0 672px,#10b2a7 688px,#0ab0ac 704px,#09b0ae 720px,#09b0ae 736px,#08b0af 752px,#08b0af 768px,#07b0b0 784px,#06b0b0 800px,#06afb1 816px,#05afb2 832px,#04afb2 848px,#03afb3 864px,#02afb4 880px,#02aeb5 896px,#00aeb6 912px,#00adb6 928px,#00aab6 944px,#00a8b6 960px,#00a5b6 976px)"></i><i style="top:660px;background:linear-gradient(90deg,#0098b6 0px,#009cb6 16px,#009fb6 32px,#00a3b6 48px,#00a6b6 64px,#00a9b6 80px,#00abb6 96px,#00aeb6 112px,#01aeb6 128px,#02aeb5 144px,#03afb3 160px,#05afb2 176px,#07b0b0 192px,#08b0af 208px,#08b0ae 224px,#09b0ae 240px,#0ab0ad 256px,#12b2a5 272px,#1bb49c 288px,#24b793 304px,#2cb88b 320px,#32b886 336px,#36b881 352px,#3bb77d 368px,#3fb778 384px,#43b774 400px,#47b670 416px,#4ab66d 432px,#4cb66b 448px,#4db66a 464px,#4db66a 480px,#4cb66c 496px,#49b66e 512px,#46b671 528px,#43b775 544px,#3eb779 560px,#3ab77d 576px,#35b882 592px,#31b886 608px,#2bb88c 624px,#25b792 640px,#1eb599 656px,#17b39f 672px,#12b2a5 688px,#0db1aa 704px,#09b0ad 720px,#09b0ae 736px,#08b0ae 752px,#08b0af 768px,#08b0af 784px,#07b0b0 800px,#07b0b0 816px,#06afb1 832px,#05afb1 848px,#05afb2 864px,#04afb3 880px,#03afb4 896px,#02aeb5 912px,#01aeb6 928px,#00aeb6 944px,#00acb6 960px,#00a9b6 976px)"></i><i style="top:672px;background:linear-gradient(90deg,#009eb6 0px,#00a1b6 16px,#00a4b6 32px,#00a8b6 48px,#00abb6 64px,#00adb6 80px,#01aeb6 96px,#02aeb5 112px,#03afb4 128px,#04afb2 144px,#05afb1 160px,#07b0b0 176px,#08b0af 192px,#08b0ae 208px,#09b0ae 224px,#09b0ad 240px,#0db1aa 256px,#14b3a3 272px,#1cb59b 288px,#23b694 304px,#2ab88d 320px,#2eb889 336px,#32b885 352px,#37b880 368px,#3bb77c 384px,#3fb778 400px,#42b775 416px,#45b672 432px,#47b670 448px,#48b66f 464px,#48b66f 480px,#47b671 496px,#45b673 512px,#42b776 528px,#3eb779 544px,#3ab77d 560px,#36b881 576px,#32b885 592px,#2eb88a 608px,#29b88e 624px,#24b693 640px,#1eb599 656px,#18b49f 672px,#13b2a4 688px,#0eb1a8 704px,#0bb0ac 720px,#09b0ad 736px,#09b0ae 752px,#09b0ae 768px,#08b0af 784px,#08b0af 800px,#07b0af 816px,#07b0b0 832px,#06afb0 848px,#06afb1 864px,#05afb2 880px,#04afb2 896px,#03afb3 912px,#02afb4 928px,#02aeb5 944px,#01aeb6 960px,#00adb6 976px)"></i><i style="top:684px;background:linear-gradient(90deg,#00a3b6 0px,#00a6b6 16px,#00a9b6 32px,#00acb6 48px,#00aeb6 64px,#02aeb5 80px,#03afb4 96px,#04afb3 112px,#05afb2 128px,#06afb1 144px,#07b0b0 160px,#08b0ae 176px,#09b0ae 192px,#09b0ae 208px,#09b0ad 224px,#0ab0ad 240px,#10b2a7 256px,#16b3a1 272px,#1cb59b 288px,#23b694 304px,#28b78f 320px,#2cb88c 336px,#30b888 352px,#34b884 368px,#38b880 384px,#3bb77c 400px,#3eb779 416px,#41b776 432px,#43b775 448px,#43b774 464px,#43b774 480px,#42b775 496px,#40b777 512px,#3eb77a 528px,#3ab77d 544px,#37b880 560px,#33b884 576px,#2fb888 592px,#2bb88c 608px,#27b790 624px,#23b694 640px,#1eb599 656px,#19b49e 672px,#14b3a3 688px,#10b2a7 704px,#0cb1ab 720px,#0ab0ad 736px,#09b0ad 752px,#09b0ae 768px,#09b0ae 784px,#08b0ae 800px,#08b0af 816px,#07b0af 832px,#07b0b0 848px,#06b0b0 864px,#06afb1 880px,#05afb1 896px,#05afb2 912px,#04afb3 928px,#03afb4 944px,#02aeb4 960px,#01aeb5 976px)"></i><i style="top:696px;background:linear-gradient(90deg,#00a8b6 0px,#00abb6 16px,#00aeb6 32px,#01aeb5 48px,#02afb4 64px,#04afb3 80px,#05afb2 96px,#05afb1 112px,#06afb0 128px,#07b0af 144px,#08b0ae 160px,#09b0ae 176px,#09b0ae 192px,#09b0ad 208px,#0ab0ad 224px,#0cb1aa 240px,#11b2a5 256px,#17b3a0 272px,#1db59a 288px,#22b695 304px,#26b791 320px,#2ab88d 336px,#2db88a 352px,#31b886 368px,#35b882 384px,#38b87f 400px,#3bb77c 416px,#3db77a 432px,#3fb778 448px,#3fb778 464px,#3fb778 480px,#3eb779 496px,#3db77b 512px,#3ab77d 528px,#37b880 544px,#34b883 560px,#30b887 576px,#2db88b 592px,#2ab88e 608px,#26b791 624px,#22b695 640px,#1db59a 656px,#19b49e 672px,#15b3a2 688px,#11b2a6 704px,#0db1a9 720px,#0bb0ac 736px,#0ab0ad 752px,#09b0ad 768px,#09b0ae 784px,#09b0ae 800px,#08b0ae 816px,#08b0af 832px,#08b0af 848px,#07b0af 864px,#07b0b0 880px,#06afb0 896px,#06afb1 912px,#05afb2 928px,#04afb2 944px,#03afb3 960px,#03afb4 976px)"></i><i style="top:708px;background:linear-gradient(90deg,#00acb6 0px,#00aeb6 16px,#02aeb5 32px,#03afb4 48px,#04afb2 64px,#05afb1 80px,#06afb1 96px,#07b0b0 112px,#08b0af 128px,#08b0ae 144px,#09b0ae 160px,#09b0ae 176px,#09b0ad 192px,#0ab0ad 208px,#0ab0ac 224px,#0eb1a8 240px,#13b2a4 256px,#18b49f 272px,#1db59a 288px,#21b696 304px,#25b792 320px,#29b88f 336px,#2cb88c 352px,#2fb888 368px,#32b885 384px,#35b882 400px,#38b87f 416px,#3ab77d 432px,#3bb77c 448px,#3cb77b 464px,#3cb77b 480px,#3bb77c 496px,#39b77e 512px,#37b880 528px,#34b883 544px,#31b886 560px,#2eb889 576px,#2bb88c 592px,#28b78f 608px,#25b792 624px,#21b696 640px,#1db59a 656px,#19b49e 672px,#15b3a2 688px,#12b2a5 704px,#0fb1a8 720px,#0cb1ab 736px,#0ab0ad 752px,#0ab0ad 768px,#0ab0ad 784px,#09b0ad 800px,#09b0ae 816px,#09b0ae 832px,#08b0ae 848px,#08b0af 864px,#07b0af 880px,#07b0b0 896px,#07b0b0 912px,#06afb1 928px,#05afb1 944px,#05afb2 960px,#04afb3 976px)"></i><i style="top:720px;background:linear-gradient(90deg,#01aeb5 0px,#02afb4 16px,#04afb3 32px,#05afb2 48px,#06afb1 64px,#06b0b0 80px,#07b0af 96px,#08b0af 112px,#09b0ae 128px,#09b0ae 144px,#09b0ad 160px,#0ab0ad 176px,#0ab0ad 192px,#0ab0ac 208px,#0cb1ab 224px,#10b2a7 240px,#14b3a3 256px,#18b49f 272px,#1db59a 288px,#21b696 304px,#24b793 320px,#27b790 336px,#2ab88d 352px,#2db88a 368px,#30b887 384px,#33b884 400px,#35b882 416px,#37b880 432px,#38b77f 448px,#39b77e 464px,#39b77e 480px,#38b87f 496px,#36b881 512px,#34b883 528px,#32b885 544px,#2fb888 560px,#2cb88b 576px,#29b88e 592px,#27b790 608px,#24b693 624px,#20b697 640px,#1db59a 656px,#19b49e 672px,#16b3a1 688px,#13b2a4 704px,#10b2a7 720px,#0db1aa 736px,#0bb1ac 752px,#0ab0ac 768px,#0ab0ad 784px,#0ab0ad 800px,#09b0ad 816px,#09b0ae 832px,#09b0ae 848px,#08b0ae 864px,#08b0af 880px,#08b0af 896px,#07b0af 912px,#07b0b0 928px,#06b0b0 944px,#06afb1 960px,#05afb1 976px)"></i><i style="top:732px;background:linear-gradient(90deg,#03afb4 0px,#04afb3 16px,#05afb1 32px,#06afb1 48px,#07b0b0 64px,#08b0af 80px,#08b0ae 96px,#09b0ae 112px,#09b0ad 128px,#09b0ad 144px,#0ab0ad 160px,#0ab0ad 176px,#0ab0ac 192px,#0bb0ac 208px,#0eb1a9 224px,#11b2a6 240px,#15b3a2 256px,#19b49e 272px,#1db59a 288px,#20b697 304px,#24b693 320px,#27b791 336px,#29b88e 352px,#2cb88b 368px,#2eb889 384px,#31b886 400px,#33b884 416px,#35b883 432px,#36b881 448px,#36b881 464px,#36b881 480px,#35b882 496px,#34b884 512px,#32b885 528px,#2fb888 544px,#2db88a 560px,#2bb88d 576px,#28b78f 592px,#26b791 608px,#23b694 624px,#20b597 640px,#1cb59a 656px,#19b49e 672px,#16b3a1 688px,#13b2a4 704px,#10b2a6 720px,#0eb1a9 736px,#0cb1ab 752px,#0bb0ac 768px,#0ab0ac 784px,#0ab0ad 800px,#0ab0ad 816px,#09b0ad 832px,#09b0ad 848px,#09b0ae 864px,#09b0ae 880px,#08b0ae 896px,#08b0af 912px,#08b0af 928px,#07b0af 944px,#07b0b0 960px,#06afb0 976px)"></i><i style="top:744px;background:linear-gradient(90deg,#05afb2 0px,#06afb1 16px,#06b0b0 32px,#07b0af 48px,#08b0af 64px,#09b0ae 80px,#09b0ae 96px,#09b0ad 112px,#0ab0ad 128px,#0ab0ad 144px,#0ab0ad 160px,#0ab0ac 176px,#0bb0ac 192px,#0cb1ab 208px,#0fb2a8 224px,#12b2a5 240px,#16b3a1 256px,#19b49e 272px,#1db59a 288px,#20b697 304px,#23b694 320px,#26b791 336px,#28b78f 352px,#2bb88d 368px,#2db88a 384px,#2fb888 400px,#31b886 416px,#32b885 432px,#33b884 448px,#34b884 464px,#33b884 480px,#33b885 496px,#31b886 512px,#30b888 528px,#2db88a 544px,#2bb88c 560px,#29b88e 576px,#27b790 592px,#25b792 608px,#22b695 624px,#1fb598 640px,#1cb59b 656px,#19b49e 672px,#16b3a0 688px,#14b3a3 704px,#11b2a6 720px,#0fb2a8 736px,#0db1aa 752px,#0bb1ac 768px,#0bb0ac 784px,#0ab0ac 800px,#0ab0ac 816px,#0ab0ad 832px,#0ab0ad 848px,#09b0ad 864px,#09b0ad 880px,#09b0ae 896px,#09b0ae 912px,#08b0ae 928px,#08b0af 944px,#08b0af 960px,#07b0af 976px)"></i><i style="top:756px;background:linear-gradient(90deg,#06afb1 0px,#07b0b0 16px,#08b0af 32px,#08b0ae 48px,#09b0ae 64px,#09b0ad 80px,#0ab0ad 96px,#0ab0ad 112px,#0ab0ad 128px,#0ab0ac 144px,#0bb0ac 160px,#0bb1ac 176px,#0bb1ac 192px,#0db1a9 208px,#10b2a7 224px,#13b2a4 240px,#16b3a0 256px,#1ab49d 272px,#1db59a 288px,#20b597 304px,#23b694 320px,#25b792 336px,#27b790 352px,#2ab88e 368px,#2bb88c 384px,#2db88a 400px,#2fb888 416px,#30b887 432px,#31b886 448px,#31b886 464px,#31b886 480px,#30b887 496px,#2fb888 512px,#2eb88a 528px,#2cb88b 544px,#2ab88d 560px,#28b78f 576px,#26b791 592px,#24b693 608px,#21b696 624px,#1fb598 640px,#1cb59b 656px,#19b49e 672px,#17b3a0 688px,#14b3a3 704px,#12b2a5 720px,#10b2a7 736px,#0eb1a9 752px,#0cb1ab 768px,#0bb1ac 784px,#0bb1ac 800px,#0bb0ac 816px,#0ab0ac 832px,#0ab0ad 848px,#0ab0ad 864px,#0ab0ad 880px,#09b0ad 896px,#09b0ad 912px,#09b0ae 928px,#09b0ae 944px,#08b0ae 960px,#08b0af 976px)"></i></div></div><!--/FIELD-->
<!--GRAPHICS-->
<svg class="a" style="left:525px;top:125px;overflow:visible" width="922" height="718" viewBox="525 125 922 718">
<defs>
  <filter id="b40" x="-50%" y="-50%" width="200%" height="200%"><feGaussianBlur stdDeviation="40"/></filter>
  <filter id="b25" x="-50%" y="-50%" width="200%" height="200%"><feGaussianBlur stdDeviation="25"/></filter>
  <filter id="b12" x="-50%" y="-50%" width="200%" height="200%"><feGaussianBlur stdDeviation="12"/></filter>
  <filter id="b3" x="-100%" y="-100%" width="300%" height="300%"><feGaussianBlur stdDeviation="3"/></filter>
  <filter id="b2" x="-100%" y="-100%" width="300%" height="300%"><feGaussianBlur stdDeviation="1.8"/></filter>
  <filter id="b6" x="-50%" y="-50%" width="200%" height="200%"><feGaussianBlur stdDeviation="6"/></filter>
  <clipPath id="web"><path d="M525 224.4 L1447 204 L1447 738 L774 843 L525 843 Z"/></clipPath>
  <linearGradient id="flange" gradientUnits="userSpaceOnUse" x1="0" y1="125" x2="0" y2="209" gradientTransform="translate(0 4.6) skewY(-0.5)">
    <stop offset="0" stop-color="#08b8e2"/>
    <stop offset="0.16" stop-color="#0590e0"/>
    <stop offset="0.42" stop-color="#0004d8"/>
    <stop offset="0.6" stop-color="#0448dc"/>
    <stop offset="0.78" stop-color="#04a0e4"/>
    <stop offset="0.92" stop-color="#06d4dc"/>
    <stop offset="1" stop-color="#10e6c8"/>
  </linearGradient>
  <radialGradient id="hot"><stop offset="0" stop-color="#d81810"/><stop offset="0.25" stop-color="#f06010"/><stop offset="0.55" stop-color="#e8c010"/><stop offset="1" stop-color="#c8c020" stop-opacity="0"/></radialGradient>
  <radialGradient id="cold"><stop offset="0" stop-color="#0020c0"/><stop offset="1" stop-color="#0040c0" stop-opacity="0"/></radialGradient>
  <linearGradient id="holelow" gradientUnits="userSpaceOnUse" x1="0" y1="628" x2="0" y2="676">
    <stop offset="0" stop-color="#08bcf0"/><stop offset="0.5" stop-color="#0884e4"/><stop offset="1" stop-color="#0444d0"/>
  </linearGradient>
  <linearGradient id="rstrip" gradientUnits="userSpaceOnUse" x1="0" y1="353" x2="0" y2="660">
    <stop offset="0" stop-color="#c09020"/><stop offset="0.03" stop-color="#40a898"/><stop offset="0.1" stop-color="#0a70c8"/><stop offset="0.2" stop-color="#0a98bc"/><stop offset="0.5" stop-color="#0aa0b8"/><stop offset="0.8" stop-color="#0a98bc"/><stop offset="0.9" stop-color="#0a60c8"/><stop offset="0.96" stop-color="#30a8a0"/><stop offset="1" stop-color="#b0b030"/>
  </linearGradient>
  <linearGradient id="cb" x1="0" y1="1" x2="0" y2="0">
    <stop offset="0" stop-color="#0000f0"/>
    <stop offset="0.112" stop-color="#0030ff"/>
    <stop offset="0.212" stop-color="#0070ff"/>
    <stop offset="0.313" stop-color="#00e8ff"/>
    <stop offset="0.413" stop-color="#30ffc8"/>
    <stop offset="0.513" stop-color="#80ff80"/>
    <stop offset="0.588" stop-color="#c8ff40"/>
    <stop offset="0.664" stop-color="#ffff00"/>
    <stop offset="0.74" stop-color="#ffc000"/>
    <stop offset="0.814" stop-color="#ff8800"/>
    <stop offset="0.914" stop-color="#ff4000"/>
    <stop offset="1" stop-color="#ff0000"/>
  </linearGradient>
  <linearGradient id="bstrip" gradientUnits="userSpaceOnUse" x1="800" y1="0" x2="1447" y2="0"><stop offset="0" stop-color="#10cce6"/><stop offset="0.4" stop-color="#38e4c8"/><stop offset="0.7" stop-color="#18d8e0"/><stop offset="1" stop-color="#10c8e8"/></linearGradient>
</defs>
<!-- background beyond -->
<path d="M774 843 L1447 738 L1447 843 Z" fill="#dceafa"/>
<!-- top flange -->
<path d="M525 125 L1447 122 L1447 192 L525 209 Z" fill="url(#flange)"/>
<path d="M525 209 L1447 192 L1447 201 L525 220 Z" fill="#0a7edc"/>
<path d="M525 220 L1447 201 L1447 204 L525 224.4 Z" fill="#10a0a8"/>
<!-- web field -->
<g clip-path="url(#web)">
  <g filter="url(#b6)" opacity="0.85">
    <ellipse cx="888" cy="360" rx="16" ry="9" fill="#d8b818" transform="rotate(-25 888 360)"/>
    <ellipse cx="1122" cy="347" rx="16" ry="9" fill="#d8b818" transform="rotate(20 1122 347)"/>
    <ellipse cx="866" cy="692" rx="16" ry="9" fill="#d0b820" transform="rotate(25 866 692)"/>
    <ellipse cx="1100" cy="664" rx="16" ry="9" fill="#d0b820" transform="rotate(-30 1100 664)"/>
  </g>
  <g filter="url(#b3)">
    <ellipse cx="883" cy="363" rx="10" ry="5" fill="#e88010" transform="rotate(-25 883 363)"/>
    <ellipse cx="1127" cy="350" rx="10" ry="5" fill="#e88010" transform="rotate(20 1127 350)"/>
    <ellipse cx="862" cy="688" rx="10" ry="5" fill="#e88010" transform="rotate(25 862 688)"/>
    <ellipse cx="1098" cy="660" rx="10" ry="5" fill="#e88010" transform="rotate(-30 1098 660)"/>
  </g>
  <g filter="url(#b2)">
    <ellipse cx="884" cy="364" rx="6" ry="3" fill="#c82010" transform="rotate(-25 884 364)"/>
    <ellipse cx="1127" cy="352" rx="6" ry="3" fill="#c82010" transform="rotate(20 1127 352)"/>
    <ellipse cx="861" cy="687" rx="6" ry="3" fill="#c82010" transform="rotate(25 861 687)"/>
    <ellipse cx="1097" cy="659" rx="6" ry="3" fill="#c82010" transform="rotate(-30 1097 659)"/>
  </g>
</g>
<!-- hole: outer (thickness) -->
<path d="M1118 353.4 L1123.8 353.2 C1136 355 1146 365 1145.3 378 L1124 623 C1122 640 1112 655 1097.3 656.8 L862.6 685.5 C858 685 854 683 852 680 Z" fill="url(#rstrip)"/>
<path d="M852 680 L1079 651.6 L1097.3 656.8 L862.6 685.5 Z" fill="#a6b82c"/>
<!-- front face -->
<path id="ff" d="M890.8 366 L1118 353.4 C1126 353 1129.5 365 1129 382 L1107.7 619 C1106.5 637 1094 649.7 1079 651.6 L852 680 C845 675 841 667 841 650 L859.5 402.5 C861.5 385 873 367 890.8 366 Z" fill="#0097b9"/>
<clipPath id="ffc"><path d="M890.8 366 L1118 353.4 C1126 353 1129.5 365 1129 382 L1107.7 619 C1106.5 637 1094 649.7 1079 651.6 L852 680 C845 675 841 667 841 650 L859.5 402.5 C861.5 385 873 367 890.8 366 Z"/></clipPath>
<g clip-path="url(#ffc)">
  <path d="M830 643 L1120 611.5 L1120 700 L830 700 Z" fill="url(#holelow)"/>
</g>
<g fill="none" stroke="#111" stroke-width="0.9">
  <path d="M890.8 366 L1118 353.4 C1126 353 1129.5 365 1129 382 L1107.7 619 C1106.5 637 1094 649.7 1079 651.6 L852 680 C845 675 841 667 841 650 L859.5 402.5 C861.5 385 873 367 890.8 366 Z"/>
  <path d="M1123.8 353.2 C1136 355 1146 365 1145.3 378 L1124 623 C1122 640 1112 655 1097.3 656.8 L862.6 685.5 C858 685 854 683 852 680"/>
</g>
<!-- flange lines -->
<g stroke="#0a1a1a" stroke-width="1.2" fill="none">
  <path d="M525 125.5 L1447 123"/>
  <path d="M525 209 L1447 192"/>
  <path d="M525 220 L1447 201"/>
  <path d="M525 224.4 L1447 204"/>
</g>
<!-- bottom flange edge -->
<path d="M774 843 L1447 738 L1447 744.5 L814 843 Z" fill="url(#bstrip)"/>
<path d="M774 843 L1447 738" stroke="#0a1a1a" stroke-width="1.1"/>
<path d="M814 843 L1447 744.5" stroke="#1a3a4a" stroke-width="0.7"/>
<!-- colorbar -->
<rect x="1359.5" y="151.5" width="19" height="646" fill="url(#cb)" stroke="#000" stroke-width="1"/>
<g stroke="#000" stroke-width="1">
  <path d="M1359 207.5h4M1374 207.5h4M1359 272.5h4M1374 272.5h4M1359 337.5h4M1374 337.5h4M1359 402.5h4M1374 402.5h4M1359 466.5h4M1374 466.5h4M1359 531.5h4M1374 531.5h4M1359 596.5h4M1374 596.5h4M1359 661.5h4M1374 661.5h4M1359 726.5h4M1374 726.5h4M1359 790.5h4M1374 790.5h4"/>
</g>
<g font-family="Liberation Sans" font-size="16" fill="#111">
  <text x="1388" y="213.0">1.8</text>
  <text x="1388" y="278.0">1.6</text>
  <text x="1388" y="343.0">1.4</text>
  <text x="1388" y="407.5">1.2</text>
  <text x="1388" y="472.0">1</text>
  <text x="1388" y="537.0">0.8</text>
  <text x="1388" y="601.5">0.6</text>
  <text x="1388" y="666.5">0.4</text>
  <text x="1388" y="731.5">0.2</text>
  <text x="1388" y="796.0">0</text>
  <text x="1377" y="140" font-size="18">×</text>
  <text x="1390.5" y="139.5">10</text>
  <text x="1409.5" y="133" font-size="10">4</text>
</g>
<!-- axis triad -->
<path d="M579 789 L581 763" stroke="#6f7fb8" stroke-width="1.6"/><path d="M582 752.5 l-3.6 10.5 h7z" fill="#6f7fb8"/>
<path d="M579 789 L562 784" stroke="#62a040" stroke-width="1.8"/><path d="M553 782 l9.5 -4 l0.5 8.5z" fill="#62a040"/>
<path d="M579 789 L597 788" stroke="#e0205a" stroke-width="2"/><path d="M606 787.5 l-9.5 -5 v10z" fill="#e0205a"/>
<g font-family="Liberation Sans" font-size="16" fill="#111">
  <text x="579" y="747">z</text><text x="543" y="786">y</text><text x="609" y="791">x</text>
</g>
</svg>

<!--/GRAPHICS-->

</body></html>
